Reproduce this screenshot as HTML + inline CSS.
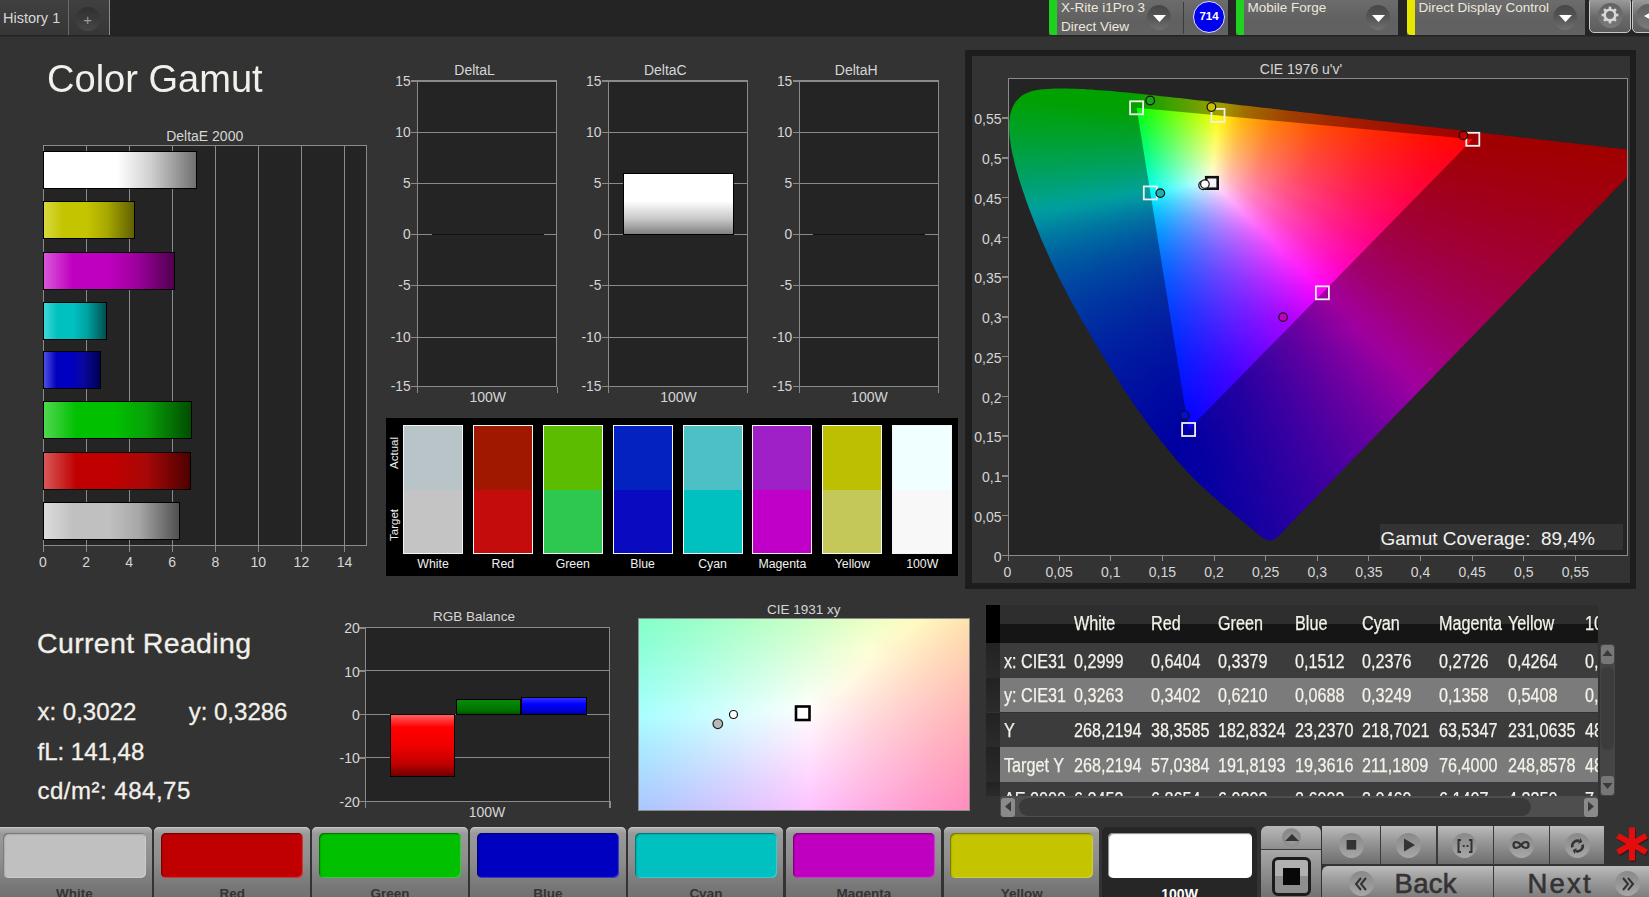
<!DOCTYPE html>
<html><head><meta charset="utf-8"><style>
html,body{margin:0;padding:0;}
body{width:1649px;height:897px;overflow:hidden;position:relative;background:#333333;font-family:'Liberation Sans',sans-serif;}
div,svg{position:absolute;}
</style></head><body>
<div style="left:0px;top:0px;width:1649px;height:36px;background:#242424"></div>
<div style="left:0px;top:36px;width:1649px;height:1px;background:#2b2b2b"></div>
<div style="left:0px;top:0px;width:68px;height:35px;background:linear-gradient(#404040,#363636)"></div>
<div style="left:68px;top:0px;width:1px;height:35px;background:#6a6a6a"></div>
<div style="left:69px;top:0px;width:40px;height:35px;background:linear-gradient(#404040,#363636)"></div>
<div style="left:109px;top:0px;width:1px;height:35px;background:#8a8a8a"></div>
<div style="left:76px;top:7.3px;width:23.5px;height:23.5px;border-radius:50%;background:linear-gradient(#303030,#3a3a3a 50%,#474747)"></div>
<div style="left:77.7px;top:12.3px;width:20px;text-align:center;font-size:15px;line-height:15px;color:#9a9a9a;white-space:nowrap;">+</div>
<div style="left:3px;top:10.7px;font-size:14.5px;line-height:14.5px;color:#d8d8d8;white-space:nowrap;">History 1</div>
<div style="left:1049px;top:0px;width:179px;height:35px;background:linear-gradient(#6c6c6c,#606060 60%,#626262)"></div>
<div style="left:1049px;top:0px;width:8px;height:35px;background:#1fd21f;border-radius:0 0 0 4px"></div>
<div style="left:1061px;top:0.7px;font-size:13.5px;line-height:13.5px;color:#ece8dc;white-space:nowrap;">X-Rite i1Pro 3</div>
<div style="left:1061px;top:19.7px;font-size:13.5px;line-height:13.5px;color:#ece8dc;white-space:nowrap;">Direct View</div>
<div style="left:1147px;top:4.5px;width:24px;height:25px;border-radius:50%;background:linear-gradient(#464646,#585858 55%,#707070)"></div>
<svg style="left:1152.5px;top:14.8px" width="14" height="8"><path d="M0 0H13L6.5 7Z" fill="#fff"/></svg>
<div style="left:1183px;top:2px;width:1px;height:32px;background:#3c3c3c"></div>
<div style="left:1193px;top:0.8px;width:32px;height:32px;border-radius:50%;background:#0000ee;box-sizing:border-box;border:1.3px solid #e0e0ff"></div>
<div style="left:1189.0px;top:11.3px;width:40px;text-align:center;font-size:11.5px;line-height:11.5px;color:#fff;white-space:nowrap;font-weight:bold">714</div>
<div style="left:1235.5px;top:0px;width:162.5px;height:35px;background:linear-gradient(#6c6c6c,#606060 60%,#626262)"></div>
<div style="left:1235.5px;top:0px;width:8px;height:35px;background:#1fd21f;border-radius:0 0 0 4px"></div>
<div style="left:1247.5px;top:0.7px;font-size:13.5px;line-height:13.5px;color:#ece8dc;white-space:nowrap;">Mobile Forge</div>
<div style="left:1366px;top:4.5px;width:24px;height:25px;border-radius:50%;background:linear-gradient(#464646,#585858 55%,#707070)"></div>
<svg style="left:1371.5px;top:14.8px" width="14" height="8"><path d="M0 0H13L6.5 7Z" fill="#fff"/></svg>
<div style="left:1406.5px;top:0px;width:178.5px;height:35px;background:linear-gradient(#6c6c6c,#606060 60%,#626262)"></div>
<div style="left:1406.5px;top:0px;width:8px;height:35px;background:#e6e600;border-radius:0 0 0 4px"></div>
<div style="left:1418.5px;top:0.7px;font-size:13.5px;line-height:13.5px;color:#ece8dc;white-space:nowrap;">Direct Display Control</div>
<div style="left:1553px;top:4.5px;width:24px;height:25px;border-radius:50%;background:linear-gradient(#464646,#585858 55%,#707070)"></div>
<svg style="left:1558.5px;top:14.8px" width="14" height="8"><path d="M0 0H13L6.5 7Z" fill="#fff"/></svg>
<div style="left:1589px;top:-3px;width:42px;height:35.6px;box-sizing:border-box;border:1px solid #c8c8c8;border-radius:5px;background:linear-gradient(#a0a0a0,#6a6a6a 55%,#5c5c5c)"></div>
<div style="left:1597.5px;top:3px;width:25px;height:25px;border-radius:50%;background:linear-gradient(#606060,#7a7a7a)"></div>
<svg style="left:1600px;top:5.4px" width="20" height="20"><rect x="8.7" y="1.6" width="2.6" height="4" fill="#d8d8d8" transform="rotate(0 10 10)"/><rect x="8.7" y="1.6" width="2.6" height="4" fill="#d8d8d8" transform="rotate(45 10 10)"/><rect x="8.7" y="1.6" width="2.6" height="4" fill="#d8d8d8" transform="rotate(90 10 10)"/><rect x="8.7" y="1.6" width="2.6" height="4" fill="#d8d8d8" transform="rotate(135 10 10)"/><rect x="8.7" y="1.6" width="2.6" height="4" fill="#d8d8d8" transform="rotate(180 10 10)"/><rect x="8.7" y="1.6" width="2.6" height="4" fill="#d8d8d8" transform="rotate(225 10 10)"/><rect x="8.7" y="1.6" width="2.6" height="4" fill="#d8d8d8" transform="rotate(270 10 10)"/><rect x="8.7" y="1.6" width="2.6" height="4" fill="#d8d8d8" transform="rotate(315 10 10)"/><circle cx="10" cy="10" r="5.3" fill="none" stroke="#d8d8d8" stroke-width="2.6"/></svg>
<div style="left:1632px;top:-3px;width:30px;height:35.6px;box-sizing:border-box;border:1px solid #c8c8c8;border-radius:5px;background:linear-gradient(#a0a0a0,#6a6a6a 55%,#5c5c5c)"></div>
<div style="left:1636px;top:3.5px;width:25px;height:25px;border-radius:50%;background:linear-gradient(#606060,#7a7a7a)"></div>
<svg style="left:1644px;top:9.5px" width="11" height="12"><path d="M11 0V12L0 6Z" fill="#fff"/></svg>
<div style="left:46.5px;top:58.8px;font-size:39.5px;line-height:39.5px;color:#f2f0ea;white-space:nowrap;transform:scaleX(0.963);transform-origin:0 0">Color Gamut</div>
<div style="left:4.7px;top:129.1px;width:400px;text-align:center;font-size:14px;line-height:14px;color:#d6d6d6;white-space:nowrap;">DeltaE 2000</div>
<div style="left:42.5px;top:145.3px;width:324.0px;height:400.7px;box-sizing:border-box;border:1px solid #8a8a8a;background:#242424"></div>
<div style="left:85.56666666666666px;top:145.3px;width:1px;height:406.7px;background:#8a8a8a"></div>
<div style="left:128.63333333333333px;top:145.3px;width:1px;height:406.7px;background:#8a8a8a"></div>
<div style="left:171.70000000000002px;top:145.3px;width:1px;height:406.7px;background:#8a8a8a"></div>
<div style="left:214.76666666666668px;top:145.3px;width:1px;height:406.7px;background:#8a8a8a"></div>
<div style="left:257.83333333333337px;top:145.3px;width:1px;height:406.7px;background:#8a8a8a"></div>
<div style="left:300.90000000000003px;top:145.3px;width:1px;height:406.7px;background:#8a8a8a"></div>
<div style="left:343.9666666666667px;top:145.3px;width:1px;height:406.7px;background:#8a8a8a"></div>
<div style="left:42.5px;top:545px;width:1px;height:7px;background:#8a8a8a"></div>
<div style="left:23.0px;top:554.9px;width:40px;text-align:center;font-size:14px;line-height:14px;color:#d6d6d6;white-space:nowrap;">0</div>
<div style="left:66.1px;top:554.9px;width:40px;text-align:center;font-size:14px;line-height:14px;color:#d6d6d6;white-space:nowrap;">2</div>
<div style="left:109.1px;top:554.9px;width:40px;text-align:center;font-size:14px;line-height:14px;color:#d6d6d6;white-space:nowrap;">4</div>
<div style="left:152.2px;top:554.9px;width:40px;text-align:center;font-size:14px;line-height:14px;color:#d6d6d6;white-space:nowrap;">6</div>
<div style="left:195.3px;top:554.9px;width:40px;text-align:center;font-size:14px;line-height:14px;color:#d6d6d6;white-space:nowrap;">8</div>
<div style="left:238.3px;top:554.9px;width:40px;text-align:center;font-size:14px;line-height:14px;color:#d6d6d6;white-space:nowrap;">10</div>
<div style="left:281.4px;top:554.9px;width:40px;text-align:center;font-size:14px;line-height:14px;color:#d6d6d6;white-space:nowrap;">12</div>
<div style="left:324.5px;top:554.9px;width:40px;text-align:center;font-size:14px;line-height:14px;color:#d6d6d6;white-space:nowrap;">14</div>
<div style="left:43.0px;top:151.4px;width:153.5px;height:38px;box-sizing:border-box;border:1px solid #000;background:linear-gradient(90deg,#fff,#fff 22%,#fff 48%,#d0d0d0 70%,#707070)"></div>
<div style="left:43.0px;top:201.4px;width:91.5px;height:38px;box-sizing:border-box;border:1px solid #000;background:linear-gradient(90deg,#d8d840,#c4c400 22%,#c4c400 48%,#a8a800 70%,#606000)"></div>
<div style="left:43.0px;top:251.6px;width:131.5px;height:38px;box-sizing:border-box;border:1px solid #000;background:linear-gradient(90deg,#d858d8,#c000c0 22%,#c000c0 48%,#a000a0 70%,#500050)"></div>
<div style="left:43.0px;top:301.5px;width:64.2px;height:38px;box-sizing:border-box;border:1px solid #000;background:linear-gradient(90deg,#40d8d8,#00c0c0 22%,#00c0c0 48%,#00a0a0 70%,#005050)"></div>
<div style="left:43.0px;top:351.3px;width:57.8px;height:38px;box-sizing:border-box;border:1px solid #000;background:linear-gradient(90deg,#5050e0,#0000c0 22%,#0000c0 48%,#0808a0 70%,#000050)"></div>
<div style="left:43.0px;top:401.3px;width:148.8px;height:38px;box-sizing:border-box;border:1px solid #000;background:linear-gradient(90deg,#50d850,#00c000 22%,#00c000 48%,#08a008 70%,#004d00)"></div>
<div style="left:43.0px;top:451.6px;width:147.5px;height:38px;box-sizing:border-box;border:1px solid #000;background:linear-gradient(90deg,#d85858,#c00000 22%,#c00000 48%,#a80808 70%,#4d0000)"></div>
<div style="left:43.0px;top:501.5px;width:136.6px;height:38px;box-sizing:border-box;border:1px solid #000;background:linear-gradient(90deg,#dcdcdc,#c0c0c0 22%,#c0c0c0 48%,#a8a8a8 70%,#505050)"></div>
<div style="left:274.5px;top:63.3px;width:400px;text-align:center;font-size:14px;line-height:14px;color:#d6d6d6;white-space:nowrap;">DeltaL</div>
<div style="left:416.9px;top:79.8px;width:140.60000000000002px;height:307.4px;box-sizing:border-box;border:1px solid #8a8a8a;border-top-width:2px;background:#242424"></div>
<div style="left:410.9px;top:80.0px;width:6px;height:1.5px;background:#8a8a8a"></div>
<div style="left:370.6px;top:74.5px;width:40px;text-align:right;font-size:13.8px;line-height:13.8px;color:#d6d6d6;white-space:nowrap;">15</div>
<div style="left:416.9px;top:131.7px;width:140.60000000000002px;height:1px;background:#8a8a8a"></div>
<div style="left:410.9px;top:131.7px;width:6px;height:1.5px;background:#8a8a8a"></div>
<div style="left:370.6px;top:126.2px;width:40px;text-align:right;font-size:13.8px;line-height:13.8px;color:#d6d6d6;white-space:nowrap;">10</div>
<div style="left:416.9px;top:182.8px;width:140.60000000000002px;height:1px;background:#8a8a8a"></div>
<div style="left:410.9px;top:182.8px;width:6px;height:1.5px;background:#8a8a8a"></div>
<div style="left:370.6px;top:177.3px;width:40px;text-align:right;font-size:13.8px;line-height:13.8px;color:#d6d6d6;white-space:nowrap;">5</div>
<div style="left:416.9px;top:233.8px;width:140.60000000000002px;height:1px;background:#8a8a8a"></div>
<div style="left:410.9px;top:233.8px;width:6px;height:1.5px;background:#8a8a8a"></div>
<div style="left:370.6px;top:228.3px;width:40px;text-align:right;font-size:13.8px;line-height:13.8px;color:#d6d6d6;white-space:nowrap;">0</div>
<div style="left:416.9px;top:284.7px;width:140.60000000000002px;height:1px;background:#8a8a8a"></div>
<div style="left:410.9px;top:284.7px;width:6px;height:1.5px;background:#8a8a8a"></div>
<div style="left:370.6px;top:279.2px;width:40px;text-align:right;font-size:13.8px;line-height:13.8px;color:#d6d6d6;white-space:nowrap;">-5</div>
<div style="left:416.9px;top:336.6px;width:140.60000000000002px;height:1px;background:#8a8a8a"></div>
<div style="left:410.9px;top:336.6px;width:6px;height:1.5px;background:#8a8a8a"></div>
<div style="left:370.6px;top:331.1px;width:40px;text-align:right;font-size:13.8px;line-height:13.8px;color:#d6d6d6;white-space:nowrap;">-10</div>
<div style="left:410.9px;top:385.9px;width:6px;height:1.5px;background:#8a8a8a"></div>
<div style="left:370.6px;top:380.4px;width:40px;text-align:right;font-size:13.8px;line-height:13.8px;color:#d6d6d6;white-space:nowrap;">-15</div>
<div style="left:416.9px;top:387.2px;width:1px;height:6px;background:#8a8a8a"></div>
<div style="left:556.5px;top:387.2px;width:1px;height:6px;background:#8a8a8a"></div>
<div style="left:287.7px;top:390.1px;width:400px;text-align:center;font-size:14px;line-height:14px;color:#d6d6d6;white-space:nowrap;">100W</div>
<div style="left:431.5px;top:233.8px;width:112.0px;height:1.3px;background:#111"></div>
<div style="left:465.3px;top:63.3px;width:400px;text-align:center;font-size:14px;line-height:14px;color:#d6d6d6;white-space:nowrap;">DeltaC</div>
<div style="left:607.6999999999999px;top:79.8px;width:140.60000000000002px;height:307.4px;box-sizing:border-box;border:1px solid #8a8a8a;border-top-width:2px;background:#242424"></div>
<div style="left:601.6999999999999px;top:80.0px;width:6px;height:1.5px;background:#8a8a8a"></div>
<div style="left:561.4px;top:74.5px;width:40px;text-align:right;font-size:13.8px;line-height:13.8px;color:#d6d6d6;white-space:nowrap;">15</div>
<div style="left:607.6999999999999px;top:131.7px;width:140.60000000000002px;height:1px;background:#8a8a8a"></div>
<div style="left:601.6999999999999px;top:131.7px;width:6px;height:1.5px;background:#8a8a8a"></div>
<div style="left:561.4px;top:126.2px;width:40px;text-align:right;font-size:13.8px;line-height:13.8px;color:#d6d6d6;white-space:nowrap;">10</div>
<div style="left:607.6999999999999px;top:182.8px;width:140.60000000000002px;height:1px;background:#8a8a8a"></div>
<div style="left:601.6999999999999px;top:182.8px;width:6px;height:1.5px;background:#8a8a8a"></div>
<div style="left:561.4px;top:177.3px;width:40px;text-align:right;font-size:13.8px;line-height:13.8px;color:#d6d6d6;white-space:nowrap;">5</div>
<div style="left:607.6999999999999px;top:233.8px;width:140.60000000000002px;height:1px;background:#8a8a8a"></div>
<div style="left:601.6999999999999px;top:233.8px;width:6px;height:1.5px;background:#8a8a8a"></div>
<div style="left:561.4px;top:228.3px;width:40px;text-align:right;font-size:13.8px;line-height:13.8px;color:#d6d6d6;white-space:nowrap;">0</div>
<div style="left:607.6999999999999px;top:284.7px;width:140.60000000000002px;height:1px;background:#8a8a8a"></div>
<div style="left:601.6999999999999px;top:284.7px;width:6px;height:1.5px;background:#8a8a8a"></div>
<div style="left:561.4px;top:279.2px;width:40px;text-align:right;font-size:13.8px;line-height:13.8px;color:#d6d6d6;white-space:nowrap;">-5</div>
<div style="left:607.6999999999999px;top:336.6px;width:140.60000000000002px;height:1px;background:#8a8a8a"></div>
<div style="left:601.6999999999999px;top:336.6px;width:6px;height:1.5px;background:#8a8a8a"></div>
<div style="left:561.4px;top:331.1px;width:40px;text-align:right;font-size:13.8px;line-height:13.8px;color:#d6d6d6;white-space:nowrap;">-10</div>
<div style="left:601.6999999999999px;top:385.9px;width:6px;height:1.5px;background:#8a8a8a"></div>
<div style="left:561.4px;top:380.4px;width:40px;text-align:right;font-size:13.8px;line-height:13.8px;color:#d6d6d6;white-space:nowrap;">-15</div>
<div style="left:607.6999999999999px;top:387.2px;width:1px;height:6px;background:#8a8a8a"></div>
<div style="left:747.3px;top:387.2px;width:1px;height:6px;background:#8a8a8a"></div>
<div style="left:478.5px;top:390.1px;width:400px;text-align:center;font-size:14px;line-height:14px;color:#d6d6d6;white-space:nowrap;">100W</div>
<div style="left:622.5px;top:173px;width:111.3px;height:62px;box-sizing:border-box;border:1px solid #000;background:linear-gradient(#fff,#fff 45%,#c8c8c8 75%,#808080)"></div>
<div style="left:656.2px;top:63.3px;width:400px;text-align:center;font-size:14px;line-height:14px;color:#d6d6d6;white-space:nowrap;">DeltaH</div>
<div style="left:798.6px;top:79.8px;width:140.60000000000002px;height:307.4px;box-sizing:border-box;border:1px solid #8a8a8a;border-top-width:2px;background:#242424"></div>
<div style="left:792.6px;top:80.0px;width:6px;height:1.5px;background:#8a8a8a"></div>
<div style="left:752.3px;top:74.5px;width:40px;text-align:right;font-size:13.8px;line-height:13.8px;color:#d6d6d6;white-space:nowrap;">15</div>
<div style="left:798.6px;top:131.7px;width:140.60000000000002px;height:1px;background:#8a8a8a"></div>
<div style="left:792.6px;top:131.7px;width:6px;height:1.5px;background:#8a8a8a"></div>
<div style="left:752.3px;top:126.2px;width:40px;text-align:right;font-size:13.8px;line-height:13.8px;color:#d6d6d6;white-space:nowrap;">10</div>
<div style="left:798.6px;top:182.8px;width:140.60000000000002px;height:1px;background:#8a8a8a"></div>
<div style="left:792.6px;top:182.8px;width:6px;height:1.5px;background:#8a8a8a"></div>
<div style="left:752.3px;top:177.3px;width:40px;text-align:right;font-size:13.8px;line-height:13.8px;color:#d6d6d6;white-space:nowrap;">5</div>
<div style="left:798.6px;top:233.8px;width:140.60000000000002px;height:1px;background:#8a8a8a"></div>
<div style="left:792.6px;top:233.8px;width:6px;height:1.5px;background:#8a8a8a"></div>
<div style="left:752.3px;top:228.3px;width:40px;text-align:right;font-size:13.8px;line-height:13.8px;color:#d6d6d6;white-space:nowrap;">0</div>
<div style="left:798.6px;top:284.7px;width:140.60000000000002px;height:1px;background:#8a8a8a"></div>
<div style="left:792.6px;top:284.7px;width:6px;height:1.5px;background:#8a8a8a"></div>
<div style="left:752.3px;top:279.2px;width:40px;text-align:right;font-size:13.8px;line-height:13.8px;color:#d6d6d6;white-space:nowrap;">-5</div>
<div style="left:798.6px;top:336.6px;width:140.60000000000002px;height:1px;background:#8a8a8a"></div>
<div style="left:792.6px;top:336.6px;width:6px;height:1.5px;background:#8a8a8a"></div>
<div style="left:752.3px;top:331.1px;width:40px;text-align:right;font-size:13.8px;line-height:13.8px;color:#d6d6d6;white-space:nowrap;">-10</div>
<div style="left:792.6px;top:385.9px;width:6px;height:1.5px;background:#8a8a8a"></div>
<div style="left:752.3px;top:380.4px;width:40px;text-align:right;font-size:13.8px;line-height:13.8px;color:#d6d6d6;white-space:nowrap;">-15</div>
<div style="left:798.6px;top:387.2px;width:1px;height:6px;background:#8a8a8a"></div>
<div style="left:938.2px;top:387.2px;width:1px;height:6px;background:#8a8a8a"></div>
<div style="left:669.4px;top:390.1px;width:400px;text-align:center;font-size:14px;line-height:14px;color:#d6d6d6;white-space:nowrap;">100W</div>
<div style="left:813.2px;top:233.8px;width:112.0px;height:1.3px;background:#111"></div>
<div style="left:386px;top:418.4px;width:572px;height:157.4px;background:#000"></div>
<div style="left:403.0px;top:425px;width:60px;height:129px;box-sizing:border-box;border:1.5px solid #f4f4f4;background:linear-gradient(#b8c4c8 64px,#c4c4c4 64px)"></div>
<div style="left:393.0px;top:557.6px;width:80px;text-align:center;font-size:12.3px;line-height:12.3px;color:#f0f0f0;white-space:nowrap;">White</div>
<div style="left:472.88px;top:425px;width:60px;height:129px;box-sizing:border-box;border:1.5px solid #f4f4f4;background:linear-gradient(#a01800 64px,#c40c0c 64px)"></div>
<div style="left:462.9px;top:557.6px;width:80px;text-align:center;font-size:12.3px;line-height:12.3px;color:#f0f0f0;white-space:nowrap;">Red</div>
<div style="left:542.76px;top:425px;width:60px;height:129px;box-sizing:border-box;border:1.5px solid #f4f4f4;background:linear-gradient(#5cbc00 64px,#2ec850 64px)"></div>
<div style="left:532.8px;top:557.6px;width:80px;text-align:center;font-size:12.3px;line-height:12.3px;color:#f0f0f0;white-space:nowrap;">Green</div>
<div style="left:612.64px;top:425px;width:60px;height:129px;box-sizing:border-box;border:1.5px solid #f4f4f4;background:linear-gradient(#0422c0 64px,#0a0ac0 64px)"></div>
<div style="left:602.6px;top:557.6px;width:80px;text-align:center;font-size:12.3px;line-height:12.3px;color:#f0f0f0;white-space:nowrap;">Blue</div>
<div style="left:682.52px;top:425px;width:60px;height:129px;box-sizing:border-box;border:1.5px solid #f4f4f4;background:linear-gradient(#4cc0c4 64px,#00c0c0 64px)"></div>
<div style="left:672.5px;top:557.6px;width:80px;text-align:center;font-size:12.3px;line-height:12.3px;color:#f0f0f0;white-space:nowrap;">Cyan</div>
<div style="left:752.4px;top:425px;width:60px;height:129px;box-sizing:border-box;border:1.5px solid #f4f4f4;background:linear-gradient(#a020c8 64px,#c000c8 64px)"></div>
<div style="left:742.4px;top:557.6px;width:80px;text-align:center;font-size:12.3px;line-height:12.3px;color:#f0f0f0;white-space:nowrap;">Magenta</div>
<div style="left:822.28px;top:425px;width:60px;height:129px;box-sizing:border-box;border:1.5px solid #f4f4f4;background:linear-gradient(#bcc000 64px,#c4c858 64px)"></div>
<div style="left:812.3px;top:557.6px;width:80px;text-align:center;font-size:12.3px;line-height:12.3px;color:#f0f0f0;white-space:nowrap;">Yellow</div>
<div style="left:892.16px;top:425px;width:60px;height:129px;box-sizing:border-box;border:1.5px solid #f4f4f4;background:linear-gradient(#f0ffff 64px,#f8f8f8 64px)"></div>
<div style="left:882.2px;top:557.6px;width:80px;text-align:center;font-size:12.3px;line-height:12.3px;color:#f0f0f0;white-space:nowrap;">100W</div>
<div style="left:368px;top:446px;width:52px;height:14px;transform:rotate(-90deg);font-size:11.5px;line-height:14px;text-align:center;color:#eee">Actual</div>
<div style="left:368px;top:518px;width:52px;height:14px;transform:rotate(-90deg);font-size:11.5px;line-height:14px;text-align:center;color:#eee">Target</div>
<div style="left:965px;top:50px;width:671px;height:539px;background:#1d1d1d"></div>
<div style="left:971.5px;top:56px;width:658.5px;height:527px;background:#333333"></div>
<div style="left:1101.0px;top:62.3px;width:400px;text-align:center;font-size:14px;line-height:14px;color:#d6d6d6;white-space:nowrap;">CIE 1976 u'v'</div>
<div style="left:1008px;top:78px;width:620px;height:477px;overflow:hidden;background:#242424">
<div style="left:0;top:0;width:620px;height:477px;clip-path:polygon(264.3px 462.1px,261.1px 462.4px,257.8px 461.5px,254.5px 459.6px,251.3px 457.2px,248.2px 454.6px,245.1px 452.1px,242.1px 449.5px,239.0px 446.9px,236.0px 444.3px,232.9px 441.8px,229.8px 439.2px,226.7px 436.7px,223.6px 434.1px,220.6px 431.6px,217.5px 429.0px,214.4px 426.5px,211.4px 423.9px,208.3px 421.3px,205.3px 418.6px,202.3px 416.0px,199.3px 413.3px,196.4px 410.6px,193.5px 407.9px,190.6px 405.1px,187.7px 402.3px,184.9px 399.5px,182.1px 396.7px,179.3px 393.8px,176.6px 390.8px,173.9px 387.9px,171.2px 384.9px,168.6px 381.9px,166.0px 378.8px,163.4px 375.8px,160.9px 372.7px,158.3px 369.6px,155.8px 366.5px,153.3px 363.4px,150.9px 360.2px,148.4px 357.1px,146.0px 353.9px,143.6px 350.7px,141.2px 347.5px,138.8px 344.3px,136.4px 341.1px,134.1px 337.8px,131.8px 334.6px,129.4px 331.3px,127.2px 328.0px,124.9px 324.7px,122.6px 321.4px,120.4px 318.1px,118.2px 314.8px,115.9px 311.5px,113.7px 308.1px,111.6px 304.8px,109.4px 301.4px,107.2px 298.0px,105.1px 294.7px,103.0px 291.3px,100.9px 287.9px,98.8px 284.5px,96.7px 281.1px,94.6px 277.6px,92.5px 274.2px,90.4px 270.8px,88.4px 267.4px,86.3px 263.9px,84.3px 260.5px,82.3px 257.0px,80.3px 253.6px,78.3px 250.1px,76.3px 246.7px,74.3px 243.2px,72.3px 239.7px,70.3px 236.2px,68.4px 232.7px,66.4px 229.2px,64.5px 225.7px,62.6px 222.2px,60.7px 218.7px,58.8px 215.1px,57.0px 211.6px,55.2px 208.0px,53.3px 204.5px,51.6px 200.9px,49.8px 197.3px,48.0px 193.7px,46.3px 190.1px,44.6px 186.5px,42.9px 182.9px,41.3px 179.2px,39.6px 175.6px,38.0px 171.9px,36.4px 168.3px,34.8px 164.6px,33.2px 160.9px,31.7px 157.2px,30.2px 153.5px,28.6px 149.8px,27.1px 146.1px,25.7px 142.4px,24.2px 138.7px,22.8px 134.9px,21.4px 131.2px,20.0px 127.4px,18.6px 123.7px,17.3px 119.9px,16.0px 116.1px,14.7px 112.4px,13.4px 108.6px,12.2px 104.7px,11.0px 100.9px,9.9px 97.1px,8.8px 93.2px,7.7px 89.4px,6.7px 85.5px,5.8px 81.6px,4.9px 77.7px,4.0px 73.8px,3.3px 69.9px,2.6px 66.0px,2.1px 62.0px,1.6px 58.0px,1.3px 54.0px,1.1px 50.1px,1.1px 46.1px,1.4px 42.1px,1.9px 38.1px,2.8px 34.3px,4.0px 30.5px,5.7px 26.9px,7.8px 23.6px,10.4px 20.7px,13.3px 18.1px,16.7px 16.0px,20.2px 14.4px,24.0px 13.1px,27.9px 12.3px,31.8px 11.6px,35.8px 11.2px,39.8px 10.9px,43.8px 10.7px,47.8px 10.6px,51.8px 10.6px,55.8px 10.6px,59.8px 10.6px,63.8px 10.7px,67.8px 10.8px,71.8px 11.0px,75.8px 11.1px,79.8px 11.4px,83.7px 11.6px,87.7px 11.9px,91.7px 12.2px,95.7px 12.5px,99.7px 12.8px,103.7px 13.1px,107.7px 13.5px,111.7px 13.9px,115.6px 14.2px,119.6px 14.6px,123.6px 15.0px,127.6px 15.4px,131.6px 15.8px,135.5px 16.2px,139.5px 16.7px,143.5px 17.1px,147.5px 17.5px,151.4px 17.9px,155.4px 18.4px,159.4px 18.8px,163.4px 19.3px,167.3px 19.7px,171.3px 20.1px,175.3px 20.6px,179.3px 21.0px,183.2px 21.5px,187.2px 21.9px,191.2px 22.4px,195.2px 22.8px,199.1px 23.3px,203.1px 23.7px,207.1px 24.2px,211.1px 24.6px,215.0px 25.1px,219.0px 25.5px,223.0px 26.0px,227.0px 26.5px,230.9px 26.9px,234.9px 27.4px,238.9px 27.8px,242.9px 28.3px,246.8px 28.7px,250.8px 29.2px,254.8px 29.7px,258.8px 30.1px,262.7px 30.6px,266.7px 31.0px,270.7px 31.5px,274.6px 31.9px,278.6px 32.4px,282.6px 32.9px,286.6px 33.3px,290.5px 33.8px,294.5px 34.2px,298.5px 34.7px,302.5px 35.1px,306.4px 35.6px,310.4px 36.1px,314.4px 36.5px,318.4px 37.0px,322.3px 37.4px,326.3px 37.9px,330.3px 38.3px,334.3px 38.8px,338.2px 39.3px,342.2px 39.7px,346.2px 40.2px,350.2px 40.6px,354.1px 41.1px,358.1px 41.5px,362.1px 42.0px,366.0px 42.5px,370.0px 42.9px,374.0px 43.4px,378.0px 43.8px,381.9px 44.3px,385.9px 44.8px,389.9px 45.2px,393.9px 45.7px,397.8px 46.1px,401.8px 46.6px,405.8px 47.0px,409.8px 47.5px,413.7px 48.0px,417.7px 48.4px,421.7px 48.9px,425.7px 49.3px,429.6px 49.8px,433.6px 50.2px,437.6px 50.7px,441.5px 51.2px,445.5px 51.6px,449.5px 52.1px,453.5px 52.5px,457.4px 53.0px,461.4px 53.4px,465.4px 53.9px,469.4px 54.3px,473.3px 54.8px,477.3px 55.2px,481.3px 55.7px,485.3px 56.2px,489.2px 56.6px,493.2px 57.1px,497.2px 57.5px,501.2px 58.0px,505.1px 58.4px,509.1px 58.9px,513.1px 59.4px,517.1px 59.8px,521.0px 60.3px,525.0px 60.7px,529.0px 61.2px,532.9px 61.7px,536.9px 62.1px,540.9px 62.6px,544.9px 63.0px,548.8px 63.5px,552.8px 63.9px,556.8px 64.4px,560.8px 64.8px,564.7px 65.3px,568.7px 65.8px,572.7px 66.2px,576.7px 66.7px,580.6px 67.1px,584.6px 67.6px,588.6px 68.0px,592.6px 68.5px,596.5px 69.0px,600.5px 69.4px,604.5px 69.9px,608.5px 70.3px,612.4px 70.8px,616.4px 71.3px,620.4px 71.7px,624.3px 72.2px,628.3px 72.6px,632.3px 73.1px,636.1px 73.6px,638.5px 74.6px,639.4px 76.2px,638.9px 78.2px,636.8px 80.9px,634.0px 83.7px,631.2px 86.6px,628.4px 89.5px,625.6px 92.3px,622.9px 95.2px,620.1px 98.1px,617.3px 100.9px,614.5px 103.8px,611.7px 106.7px,608.9px 109.6px,606.1px 112.4px,603.3px 115.3px,600.6px 118.2px,597.8px 121.0px,595.0px 123.9px,592.2px 126.8px,589.4px 129.6px,586.6px 132.5px,583.8px 135.4px,581.0px 138.2px,578.3px 141.1px,575.5px 144.0px,572.7px 146.9px,569.9px 149.7px,567.1px 152.6px,564.3px 155.5px,561.5px 158.3px,558.7px 161.2px,556.0px 164.1px,553.2px 166.9px,550.4px 169.8px,547.6px 172.7px,544.8px 175.5px,542.0px 178.4px,539.2px 181.3px,536.5px 184.2px,533.7px 187.0px,530.9px 189.9px,528.1px 192.8px,525.3px 195.6px,522.5px 198.5px,519.7px 201.4px,516.9px 204.2px,514.2px 207.1px,511.4px 210.0px,508.6px 212.8px,505.8px 215.7px,503.0px 218.6px,500.2px 221.5px,497.4px 224.3px,494.6px 227.2px,491.9px 230.1px,489.1px 232.9px,486.3px 235.8px,483.5px 238.7px,480.7px 241.5px,477.9px 244.4px,475.1px 247.3px,472.4px 250.1px,469.6px 253.0px,466.8px 255.9px,464.0px 258.8px,461.2px 261.6px,458.4px 264.5px,455.6px 267.4px,452.8px 270.2px,450.1px 273.1px,447.3px 276.0px,444.5px 278.8px,441.7px 281.7px,438.9px 284.6px,436.1px 287.4px,433.3px 290.3px,430.5px 293.2px,427.8px 296.1px,425.0px 298.9px,422.2px 301.8px,419.4px 304.7px,416.6px 307.5px,413.8px 310.4px,411.0px 313.3px,408.2px 316.1px,405.5px 319.0px,402.7px 321.9px,399.9px 324.7px,397.1px 327.6px,394.3px 330.5px,391.5px 333.4px,388.7px 336.2px,386.0px 339.1px,383.2px 342.0px,380.4px 344.8px,377.6px 347.7px,374.8px 350.6px,372.0px 353.4px,369.2px 356.3px,366.4px 359.2px,363.7px 362.0px,360.9px 364.9px,358.1px 367.8px,355.3px 370.7px,352.5px 373.5px,349.7px 376.4px,346.9px 379.3px,344.1px 382.1px,341.4px 385.0px,338.6px 387.9px,335.8px 390.7px,333.0px 393.6px,330.2px 396.5px,327.4px 399.3px,324.6px 402.2px,321.8px 405.1px,319.1px 408.0px,316.3px 410.8px,313.5px 413.7px,310.7px 416.6px,307.9px 419.4px,305.1px 422.3px,302.3px 425.2px,299.6px 428.0px,296.8px 430.9px,294.0px 433.8px,291.2px 436.6px,288.4px 439.5px,285.6px 442.4px,282.8px 445.3px,280.0px 448.1px,277.3px 451.0px,274.5px 453.9px,271.7px 456.7px,268.9px 459.5px,265.8px 461.5px)"><div style="left:-10px;top:-10px;width:640px;height:497px;filter:blur(2.5px)"><div style="left:0;top:0px;width:640px;height:6px;background:linear-gradient(90deg,#00a100 0px,#00a100 60px,#00a100 120px,#04a100 135px,#65a100 195px,#a19e00 225px,#a16a00 257px,#a13c00 310px,#a12100 370px,#a11100 430px,#a10700 490px,#a10000 550px,#a10000 610px,#a10000 639px)"></div><div style="left:0;top:5px;width:640px;height:6px;background:linear-gradient(90deg,#00a100 0px,#00a100 60px,#00a100 120px,#04a100 136px,#67a100 196px,#a19d00 225px,#a16800 257px,#a13b00 310px,#a12100 370px,#a11100 430px,#a10600 490px,#a10000 550px,#a10000 610px,#a10000 639px)"></div><div style="left:0;top:10px;width:640px;height:6px;background:linear-gradient(90deg,#00a100 0px,#00a100 60px,#00a100 120px,#05a100 137px,#67a100 196px,#a19e00 224px,#a16a00 255px,#a13d00 306px,#a12100 366px,#a11100 426px,#a10600 486px,#a10000 546px,#a10000 606px,#a10000 639px)"></div><div style="left:0;top:15px;width:640px;height:6px;background:linear-gradient(90deg,#00a100 0px,#00a100 60px,#00a100 120px,#05a100 138px,#68a100 196px,#a19d00 224px,#a16900 255px,#a13c00 306px,#a12000 366px,#a11000 426px,#a10500 486px,#a10000 546px,#a10000 606px,#a10000 639px)"></div><div style="left:0;top:20px;width:640px;height:6px;background:linear-gradient(90deg,#00a100 0px,#00a100 60px,#00a100 120px,#04a100 138px,#66a100 195px,#a19e00 223px,#a16a00 253px,#a13d00 302px,#a12100 362px,#a11000 422px,#a10500 482px,#a10000 542px,#a10000 602px,#a10000 639px)"></div><div style="left:0;top:25px;width:640px;height:6px;background:linear-gradient(90deg,#00a101 0px,#00a100 60px,#00a100 120px,#04a100 139px,#66a100 195px,#a19d00 223px,#a16900 253px,#a13c00 302px,#a12000 362px,#a10f00 422px,#a10500 482px,#a10000 542px,#a10000 602px,#a10000 639px)"></div><div style="left:0;top:30px;width:640px;height:6px;background:linear-gradient(90deg,#00a106 0px,#00a100 60px,#00a100 120px,#05a100 140px,#66a100 195px,#a19e00 222px,#a16a00 251px,#a13d00 299px,#a12000 359px,#a10f00 419px,#a10500 479px,#a10000 539px,#a10000 599px,#a10000 639px)"></div><div style="left:0;top:35px;width:640px;height:6px;background:linear-gradient(90deg,#00a10b 0px,#00a106 60px,#00a100 120px,#04a100 140px,#66a100 195px,#a19d00 222px,#a16900 251px,#a13c00 299px,#a11f00 359px,#a10f00 419px,#a10400 479px,#a10000 539px,#a10000 599px,#a10000 639px)"></div><div style="left:0;top:40px;width:640px;height:6px;background:linear-gradient(90deg,#00a110 0px,#00a10c 60px,#00a106 120px,#04a103 141px,#66a100 195px,#a19e00 221px,#a16900 250px,#a13c00 297px,#a11f00 357px,#a10e00 417px,#a10400 477px,#a10000 537px,#a10000 597px,#a10000 639px)"></div><div style="left:0;top:45px;width:640px;height:6px;background:linear-gradient(90deg,#00a115 0px,#00a112 60px,#00a10d 120px,#04a10b 142px,#66a104 195px,#a19d00 221px,#a16900 249px,#a13c00 295px,#a11f00 355px,#a10e00 415px,#a10300 475px,#a10000 535px,#a10000 595px,#a10000 639px)"></div><div style="left:0;top:50px;width:640px;height:6px;background:linear-gradient(90deg,#00a11b 0px,#00a118 60px,#00a114 120px,#05a112 143px,#67a10d 195px,#a19e09 220px,#a16903 248px,#a13d00 293px,#a11e00 353px,#a10e00 413px,#a10300 473px,#a10000 533px,#a10000 593px,#a10000 639px)"></div><div style="left:0;top:55px;width:640px;height:6px;background:linear-gradient(90deg,#00a120 0px,#00a11e 60px,#00a11b 120px,#03a11a 143px,#65a116 194px,#a19d13 220px,#a1690b 247px,#a13c03 292px,#a11e00 352px,#a10d00 412px,#a10200 472px,#a10000 532px,#a10000 592px,#a10000 639px)"></div><div style="left:0;top:60px;width:640px;height:6px;background:linear-gradient(90deg,#00a126 0px,#00a125 60px,#00a123 120px,#04a122 144px,#65a11f 194px,#a19e1d 219px,#a16912 246px,#a13c09 290px,#a11e02 350px,#a10d00 410px,#a10200 470px,#a10000 530px,#a10000 590px,#a10000 639px)"></div><div style="left:0;top:65px;width:640px;height:6px;background:linear-gradient(90deg,#00a12c 0px,#00a12b 60px,#00a12a 120px,#04a12a 145px,#65a129 194px,#a19d27 219px,#a1691a 245px,#a13d0e 288px,#a11d06 348px,#a10c01 408px,#a10100 468px,#a10000 528px,#a10000 588px,#a10000 639px)"></div><div style="left:0;top:70px;width:640px;height:6px;background:linear-gradient(90deg,#00a132 0px,#00a132 60px,#00a132 120px,#04a133 146px,#65a133 194px,#a19e32 218px,#a16a22 244px,#a13d14 286px,#a11d0a 346px,#a10c04 406px,#a10101 466px,#a10000 526px,#a10000 586px,#a10000 639px)"></div><div style="left:0;top:75px;width:640px;height:6px;background:linear-gradient(90deg,#00a138 0px,#00a139 60px,#00a13b 120px,#03a13b 146px,#65a13d 194px,#a19d3d 218px,#a1682a 244px,#a13c19 286px,#a11c0d 346px,#a10b07 406px,#a10003 466px,#a10001 526px,#a10000 586px,#a10000 639px)"></div><div style="left:0;top:80px;width:640px;height:6px;background:linear-gradient(90deg,#00a13e 0px,#00a140 60px,#00a143 120px,#04a144 147px,#65a148 194px,#a19f49 217px,#a16a33 242px,#a13d20 283px,#a11c12 343px,#a10b0a 403px,#a10006 463px,#a10003 523px,#a10000 583px,#a10000 639px)"></div><div style="left:0;top:85px;width:640px;height:6px;background:linear-gradient(90deg,#00a144 0px,#00a147 60px,#00a14c 120px,#04a14e 148px,#65a153 194px,#a19d55 217px,#a1683b 242px,#a13b25 283px,#a11b16 343px,#a10a0d 403px,#a10008 463px,#a10005 523px,#a10002 583px,#a10000 639px)"></div><div style="left:0;top:90px;width:640px;height:6px;background:linear-gradient(90deg,#00a14b 0px,#00a14f 60px,#00a154 120px,#04a158 149px,#66a15f 194px,#a19f62 216px,#a16a45 240px,#a13d2d 279px,#a11c1a 339px,#a10a11 399px,#a1000b 459px,#a10007 519px,#a10004 579px,#a10002 639px)"></div><div style="left:0;top:95px;width:640px;height:6px;background:linear-gradient(90deg,#00a151 0px,#00a157 60px,#00a15e 120px,#03a162 149px,#63a16a 193px,#a19d6e 216px,#a1694e 240px,#a13c33 279px,#a11b1e 339px,#a10914 399px,#a1000d 459px,#a10009 519px,#a10006 579px,#a10003 639px)"></div><div style="left:0;top:100px;width:640px;height:6px;background:linear-gradient(90deg,#00a158 0px,#00a15e 60px,#00a167 120px,#03a16d 150px,#66a177 194px,#a19f7c 215px,#a16a59 238px,#a13d3a 276px,#a11b23 336px,#a10917 396px,#a10010 456px,#a1000b 516px,#a10008 576px,#a10005 636px,#a10005 639px)"></div><div style="left:0;top:105px;width:640px;height:6px;background:linear-gradient(90deg,#00a15f 0px,#00a166 60px,#00a171 120px,#04a178 151px,#66a184 194px,#a19d89 215px,#a16962 238px,#a13c41 275px,#a11a28 335px,#a1081b 395px,#a10013 455px,#a1000d 515px,#a10009 575px,#a10007 635px,#a10006 639px)"></div><div style="left:0;top:110px;width:640px;height:6px;background:linear-gradient(90deg,#00a166 0px,#00a16f 60px,#00a17b 120px,#04a183 152px,#66a192 194px,#a19f99 214px,#a16b6e 236px,#a13d4a 272px,#a11a2d 332px,#a1081e 392px,#a10015 452px,#a10010 512px,#a1000b 572px,#a10008 632px,#a10008 639px)"></div><div style="left:0;top:115px;width:640px;height:6px;background:linear-gradient(90deg,#00a16d 0px,#00a177 60px,#00a185 120px,#03a18f 152px,#64a19f 193px,#a1949e 217px,#a16171 241px,#a1354a 280px,#a1162e 340px,#a10520 400px,#a10017 460px,#a10011 520px,#a1000d 580px,#a10009 639px)"></div><div style="left:0;top:120px;width:640px;height:6px;background:linear-gradient(90deg,#00a175 0px,#00a180 60px,#00a190 120px,#03a19b 153px,#5f94a1 194px,#a1859e 222px,#a15570 248px,#a12b48 293px,#a1102e 353px,#a10221 413px,#a10018 473px,#a10012 533px,#a1000e 593px,#a1000b 639px)"></div><div style="left:0;top:125px;width:640px;height:6px;background:linear-gradient(90deg,#00a17c 0px,#00a189 60px,#00a19b 120px,#0399a1 154px,#847fa1 214px,#a1759c 228px,#a1486d 257px,#a12145 308px,#a10b2e 368px,#a10021 428px,#a10018 488px,#a10013 548px,#a1000e 608px,#a1000d 639px)"></div><div style="left:0;top:130px;width:640px;height:6px;background:linear-gradient(90deg,#00a184 0px,#00a192 60px,#009ba1 120px,#048ea1 155px,#7d74a1 215px,#a1699d 233px,#a13f6d 264px,#a11b45 318px,#a1082f 378px,#a10022 438px,#a1001a 498px,#a10014 558px,#a1000f 618px,#a1000e 639px)"></div><div style="left:0;top:135px;width:640px;height:6px;background:linear-gradient(90deg,#00a18c 0px,#00a19c 60px,#0092a1 117px,#0484a1 156px,#776ba1 216px,#a15f9d 238px,#a1376d 271px,#a11645 328px,#a1042f 388px,#a10023 448px,#a1001b 508px,#a10015 568px,#a10010 628px,#a10010 639px)"></div><div style="left:0;top:140px;width:640px;height:6px;background:linear-gradient(90deg,#00a194 0px,#009ca1 60px,#0088a1 120px,#047aa1 157px,#7162a1 217px,#a1559d 243px,#a1306e 277px,#a11245 336px,#a10231 396px,#a10024 456px,#a1001c 516px,#a10016 576px,#a10011 636px,#a10011 639px)"></div><div style="left:0;top:145px;width:640px;height:6px;background:linear-gradient(90deg,#00a19c 0px,#0093a1 60px,#007fa1 120px,#0472a1 158px,#6c5aa1 218px,#a14c9d 248px,#a12a6d 284px,#a10e46 344px,#a10032 404px,#a10025 464px,#a1001d 524px,#a10017 584px,#a10013 639px)"></div><div style="left:0;top:150px;width:640px;height:6px;background:linear-gradient(90deg,#009da1 0px,#008ba1 60px,#0078a1 120px,#046aa1 159px,#6753a1 219px,#a1449e 253px,#a1246d 291px,#a10a47 351px,#a10033 411px,#a10027 471px,#a1001e 531px,#a10018 591px,#a10014 639px)"></div><div style="left:0;top:155px;width:640px;height:6px;background:linear-gradient(90deg,#0095a1 0px,#0084a1 60px,#0071a1 120px,#0463a1 160px,#634da1 220px,#a13d9e 258px,#a11f6e 297px,#a10849 357px,#a10035 417px,#a10028 477px,#a10020 537px,#a10019 597px,#a10016 639px)"></div><div style="left:0;top:160px;width:640px;height:6px;background:linear-gradient(90deg,#008ea1 0px,#007da1 60px,#006aa1 120px,#045da1 161px,#5f47a1 221px,#a1369e 263px,#a11a6e 304px,#a1054a 364px,#a10036 424px,#a10029 484px,#a10021 544px,#a1001a 604px,#a10018 639px)"></div><div style="left:0;top:165px;width:640px;height:6px;background:linear-gradient(90deg,#0087a1 0px,#0076a1 60px,#0064a1 120px,#0357a1 161px,#5a42a1 221px,#a12f9c 269px,#a1156d 312px,#a1024a 372px,#a10037 432px,#a1002a 492px,#a10022 552px,#a1001b 612px,#a10019 639px)"></div><div style="left:0;top:170px;width:640px;height:6px;background:linear-gradient(90deg,#0080a1 0px,#0070a1 60px,#005fa1 120px,#0351a1 162px,#563da1 222px,#a1299d 274px,#a1106c 319px,#a1004b 379px,#a10038 439px,#a1002c 499px,#a10023 559px,#a1001d 619px,#a1001b 639px)"></div><div style="left:0;top:175px;width:640px;height:6px;background:linear-gradient(90deg,#007ba1 0px,#006ba1 60px,#005aa1 120px,#034ca1 163px,#5339a1 223px,#a1249d 279px,#a10d6d 325px,#a1004c 385px,#a10039 445px,#a1002d 505px,#a10024 565px,#a1001e 625px,#a1001c 639px)"></div><div style="left:0;top:180px;width:640px;height:6px;background:linear-gradient(90deg,#0075a1 0px,#0065a1 60px,#0055a1 120px,#0348a1 164px,#5134a1 224px,#a11f9d 284px,#a1096d 332px,#a1004d 392px,#a1003a 452px,#a1002e 512px,#a10025 572px,#a1001f 632px,#a1001e 639px)"></div><div style="left:0;top:185px;width:640px;height:6px;background:linear-gradient(90deg,#0070a1 0px,#0061a1 60px,#0050a1 120px,#0443a1 165px,#4e30a1 225px,#9f1ca1 285px,#a1056c 340px,#a1004d 400px,#a1003b 460px,#a1002f 520px,#a10026 580px,#a10020 639px)"></div><div style="left:0;top:190px;width:640px;height:6px;background:linear-gradient(90deg,#006ba1 0px,#005ca1 60px,#004ca1 120px,#043fa1 166px,#4c2da1 226px,#9919a1 286px,#a11397 299px,#a10168 353px,#a1004c 413px,#a1003a 473px,#a1002f 533px,#a10026 593px,#a10021 639px)"></div><div style="left:0;top:195px;width:640px;height:6px;background:linear-gradient(90deg,#0066a1 0px,#0058a1 60px,#0048a1 120px,#043ba1 167px,#4929a1 227px,#9416a1 287px,#a1119b 301px,#a1006b 355px,#a1004e 415px,#a1003d 475px,#a10030 535px,#a10028 595px,#a10023 639px)"></div><div style="left:0;top:200px;width:640px;height:6px;background:linear-gradient(90deg,#0062a1 0px,#0054a1 60px,#0044a1 120px,#0437a1 168px,#4726a1 228px,#9013a1 288px,#a10d9c 305px,#a1006c 360px,#a10050 420px,#a1003e 480px,#a10032 540px,#a10029 600px,#a10024 639px)"></div><div style="left:0;top:205px;width:640px;height:6px;background:linear-gradient(90deg,#005ea1 0px,#0050a1 60px,#0041a1 120px,#0434a1 169px,#4523a1 229px,#8b11a1 289px,#a10a9c 310px,#a10070 361px,#a10052 421px,#a10040 481px,#a10034 541px,#a1002b 601px,#a10026 639px)"></div><div style="left:0;top:210px;width:640px;height:6px;background:linear-gradient(90deg,#005aa1 0px,#004ca1 60px,#003ea1 120px,#0431a1 170px,#4320a1 230px,#870fa1 290px,#a1079d 315px,#a1006f 369px,#a10053 429px,#a10041 489px,#a10034 549px,#a1002b 609px,#a10028 639px)"></div><div style="left:0;top:215px;width:640px;height:6px;background:linear-gradient(90deg,#0057a1 0px,#0049a1 60px,#003ba1 120px,#042ea1 171px,#421ea1 231px,#830ca1 291px,#a1039d 320px,#a1006d 380px,#a10052 440px,#a10040 500px,#a10035 560px,#a1002c 620px,#a10029 639px)"></div><div style="left:0;top:220px;width:640px;height:6px;background:linear-gradient(90deg,#0053a1 0px,#0046a1 60px,#0038a1 120px,#042ba1 172px,#401ba1 232px,#800aa1 292px,#a1009d 325px,#a1006e 385px,#a10053 445px,#a10042 505px,#a10036 565px,#a1002d 625px,#a1002b 639px)"></div><div style="left:0;top:225px;width:640px;height:6px;background:linear-gradient(90deg,#0050a1 0px,#0043a1 60px,#0035a1 120px,#0428a1 173px,#3e19a1 233px,#7c08a1 293px,#a1009d 330px,#a1006f 390px,#a10054 450px,#a10043 510px,#a10037 570px,#a1002e 630px,#a1002d 639px)"></div><div style="left:0;top:230px;width:640px;height:6px;background:linear-gradient(90deg,#004da1 0px,#0040a1 60px,#0032a1 120px,#0426a1 174px,#3d16a1 234px,#7906a1 294px,#a1009d 335px,#a10070 395px,#a10055 455px,#a10044 515px,#a10038 575px,#a1002f 635px,#a1002e 639px)"></div><div style="left:0;top:235px;width:640px;height:6px;background:linear-gradient(90deg,#004aa1 0px,#003da1 60px,#0030a1 120px,#0423a1 175px,#3b14a1 235px,#7605a1 295px,#a1009c 341px,#a10070 401px,#a10056 461px,#a10045 521px,#a10039 581px,#a10030 639px)"></div><div style="left:0;top:240px;width:640px;height:6px;background:linear-gradient(90deg,#0047a1 0px,#003ba1 60px,#002ea1 120px,#0421a1 176px,#3a12a1 236px,#7303a1 296px,#a1009c 346px,#a10071 406px,#a10057 466px,#a10046 526px,#a1003a 586px,#a10032 639px)"></div><div style="left:0;top:245px;width:640px;height:6px;background:linear-gradient(90deg,#0044a1 0px,#0038a1 60px,#002ba1 120px,#041fa1 176px,#3811a1 236px,#6f02a1 296px,#a1009c 351px,#a10072 411px,#a10058 471px,#a10047 531px,#a1003b 591px,#a10033 639px)"></div><div style="left:0;top:250px;width:640px;height:6px;background:linear-gradient(90deg,#0042a1 0px,#0036a1 60px,#0029a1 120px,#041da1 177px,#370fa1 237px,#6d00a1 297px,#a1009d 356px,#a10073 416px,#a10059 476px,#a10048 536px,#a1003c 596px,#a10035 639px)"></div><div style="left:0;top:255px;width:640px;height:6px;background:linear-gradient(90deg,#003fa1 0px,#0033a1 60px,#0027a1 120px,#041ba1 178px,#360da1 238px,#6a00a1 298px,#a1009f 358px,#a10075 418px,#a1005b 478px,#a1004a 538px,#a1003d 598px,#a10037 639px)"></div><div style="left:0;top:260px;width:640px;height:6px;background:linear-gradient(90deg,#003da1 0px,#0031a1 60px,#0025a1 120px,#0419a1 179px,#350ba1 239px,#6800a1 299px,#9e00a1 359px,#a10078 419px,#a1005d 479px,#a1004c 539px,#a1003f 599px,#a10038 639px)"></div><div style="left:0;top:265px;width:640px;height:6px;background:linear-gradient(90deg,#003aa1 0px,#002fa1 60px,#0023a1 120px,#0417a1 180px,#340aa1 240px,#6600a1 300px,#9b00a1 360px,#a10095 380px,#a10070 440px,#a10059 500px,#a10049 560px,#a1003d 620px,#a1003a 639px)"></div><div style="left:0;top:270px;width:640px;height:6px;background:linear-gradient(90deg,#0038a1 0px,#002da1 60px,#0021a1 120px,#0315a1 180px,#3208a1 240px,#6300a1 300px,#9600a1 360px,#a1009a 379px,#a10074 439px,#a1005c 499px,#a1004b 559px,#a1003f 619px,#a1003c 639px)"></div><div style="left:0;top:275px;width:640px;height:6px;background:linear-gradient(90deg,#0036a1 0px,#002ba1 60px,#0020a1 120px,#0314a1 180px,#3007a1 240px,#6000a1 300px,#9200a1 360px,#a1009b 383px,#a10075 443px,#a1005d 503px,#a1004d 563px,#a10040 623px,#a1003e 639px)"></div><div style="left:0;top:280px;width:640px;height:6px;background:linear-gradient(90deg,#0034a1 0px,#0029a1 60px,#001ea1 120px,#0212a1 180px,#2e06a1 240px,#5d00a1 300px,#8e00a1 360px,#a1009c 388px,#a10076 448px,#a1005e 508px,#a1004d 568px,#a10041 628px,#a1003f 639px)"></div><div style="left:0;top:285px;width:640px;height:6px;background:linear-gradient(90deg,#0032a1 0px,#0028a1 60px,#001ca1 120px,#0111a1 180px,#2d05a1 240px,#5b00a1 300px,#8a00a1 360px,#a1009c 392px,#a10077 452px,#a1005f 512px,#a1004f 572px,#a10042 632px,#a10041 639px)"></div><div style="left:0;top:290px;width:640px;height:6px;background:linear-gradient(90deg,#0030a1 0px,#0026a1 60px,#001ba1 120px,#0110a1 180px,#2b04a1 240px,#5800a1 300px,#8700a1 360px,#a1009d 397px,#a10078 457px,#a10060 517px,#a1004f 577px,#a10043 637px,#a10043 639px)"></div><div style="left:0;top:295px;width:640px;height:6px;background:linear-gradient(90deg,#002fa1 0px,#0024a1 60px,#001aa1 120px,#000ea1 180px,#2a03a1 240px,#5600a1 300px,#8300a1 360px,#a1009d 402px,#a10078 462px,#a10061 522px,#a10050 582px,#a10045 639px)"></div><div style="left:0;top:300px;width:640px;height:6px;background:linear-gradient(90deg,#002da1 0px,#0023a1 60px,#0018a1 120px,#000da1 180px,#2902a1 240px,#5300a1 300px,#8000a1 360px,#a1009d 407px,#a10079 467px,#a10062 527px,#a10051 587px,#a10046 639px)"></div><div style="left:0;top:305px;width:640px;height:6px;background:linear-gradient(90deg,#002ba1 0px,#0021a1 60px,#0017a1 120px,#000ca1 180px,#2701a1 240px,#5100a1 300px,#7d00a1 360px,#a1009d 412px,#a1007a 472px,#a10062 532px,#a10052 592px,#a10048 639px)"></div><div style="left:0;top:310px;width:640px;height:6px;background:linear-gradient(90deg,#002aa1 0px,#0020a1 60px,#0015a1 120px,#000ba1 180px,#2600a1 240px,#4f00a1 300px,#7a00a1 360px,#a1009d 417px,#a1007a 477px,#a10063 537px,#a10053 597px,#a1004a 639px)"></div><div style="left:0;top:315px;width:640px;height:6px;background:linear-gradient(90deg,#0028a1 0px,#001ea1 60px,#0014a1 120px,#000aa1 180px,#2500a1 240px,#4d00a1 300px,#7700a1 360px,#a1009e 420px,#a1007c 480px,#a10064 540px,#a10054 600px,#a1004c 639px)"></div><div style="left:0;top:320px;width:640px;height:6px;background:linear-gradient(90deg,#0026a1 0px,#001da1 60px,#0013a1 120px,#0009a1 180px,#2400a1 240px,#4b00a1 300px,#7400a1 360px,#9f00a1 420px,#a1007e 480px,#a10067 540px,#a10056 600px,#a1004d 639px)"></div><div style="left:0;top:325px;width:640px;height:6px;background:linear-gradient(90deg,#0025a1 0px,#001ca1 60px,#0012a1 120px,#0008a1 180px,#2200a1 240px,#4900a1 300px,#7100a1 360px,#9c00a1 420px,#a1008f 454px,#a10073 514px,#a1005f 574px,#a10050 634px,#a1004f 639px)"></div><div style="left:0;top:330px;width:640px;height:6px;background:linear-gradient(90deg,#0024a1 0px,#001aa1 60px,#0011a1 120px,#0007a1 180px,#2100a1 240px,#4700a1 300px,#6f00a1 360px,#9800a1 420px,#a1009a 442px,#a1007a 502px,#a10064 562px,#a10055 622px,#a10051 639px)"></div><div style="left:0;top:335px;width:640px;height:6px;background:linear-gradient(90deg,#0022a1 0px,#0019a1 60px,#0010a1 120px,#0006a1 180px,#2000a1 240px,#4600a1 300px,#6c00a1 360px,#9500a1 420px,#a1009b 445px,#a1007b 505px,#a10066 565px,#a10056 625px,#a10053 639px)"></div><div style="left:0;top:340px;width:640px;height:6px;background:linear-gradient(90deg,#0021a1 0px,#0018a1 60px,#000fa1 120px,#0005a1 180px,#1f00a1 240px,#4400a1 300px,#6a00a1 360px,#9200a1 420px,#a1009b 450px,#a1007c 510px,#a10066 570px,#a10057 630px,#a10055 639px)"></div><div style="left:0;top:345px;width:640px;height:6px;background:linear-gradient(90deg,#0020a1 0px,#0017a1 60px,#000ea1 120px,#0004a1 180px,#1e00a1 240px,#4200a1 300px,#6800a1 360px,#8f00a1 420px,#a1009c 454px,#a1007d 514px,#a10067 574px,#a10057 634px,#a10056 639px)"></div><div style="left:0;top:350px;width:640px;height:6px;background:linear-gradient(90deg,#001ea1 0px,#0016a1 60px,#000da1 120px,#0003a1 180px,#1600a1 227px,#3900a1 287px,#5d00a1 347px,#8300a1 407px,#a1009c 459px,#a1007d 519px,#a10068 579px,#a10058 639px)"></div><div style="left:0;top:355px;width:640px;height:6px;background:linear-gradient(90deg,#001da1 0px,#0015a1 60px,#000ca1 120px,#0002a1 180px,#1100a1 220px,#3300a1 280px,#5700a1 340px,#7c00a1 400px,#a1009f 460px,#a1007f 520px,#a1006a 580px,#a1005a 639px)"></div><div style="left:0;top:360px;width:640px;height:6px;background:linear-gradient(90deg,#001ca1 0px,#0013a1 60px,#000ba1 120px,#0001a1 180px,#0f00a1 217px,#3000a1 277px,#5300a1 337px,#7800a1 397px,#9d00a1 457px,#a10083 517px,#a1006d 577px,#a1005c 637px,#a1005c 639px)"></div><div style="left:0;top:365px;width:640px;height:6px;background:linear-gradient(90deg,#001ba1 0px,#0012a1 60px,#000aa1 120px,#0001a1 180px,#0c00a1 214px,#2d00a1 274px,#5000a1 334px,#7300a1 394px,#9800a1 454px,#a1009a 479px,#a1007d 539px,#a10068 599px,#a1005e 639px)"></div><div style="left:0;top:370px;width:640px;height:6px;background:linear-gradient(90deg,#001aa1 0px,#0011a1 60px,#0009a1 120px,#0000a1 180px,#0b00a1 212px,#2b00a1 272px,#4d00a1 332px,#7000a1 392px,#9400a1 452px,#a1009b 481px,#a1007e 541px,#a1006a 601px,#a10060 639px)"></div><div style="left:0;top:375px;width:640px;height:6px;background:linear-gradient(90deg,#0019a1 0px,#0011a1 60px,#0008a1 120px,#0000a1 180px,#0a00a1 212px,#2a00a1 272px,#4b00a1 332px,#6e00a1 392px,#9100a1 452px,#a1009b 486px,#a1007f 546px,#a1006a 606px,#a10061 639px)"></div><div style="left:0;top:380px;width:640px;height:6px;background:linear-gradient(90deg,#0018a1 0px,#0010a1 60px,#0007a1 120px,#0000a1 180px,#0900a1 212px,#2900a1 272px,#4a00a1 332px,#6b00a1 392px,#8e00a1 452px,#a1009c 490px,#a1007f 550px,#a1006b 610px,#a10063 639px)"></div><div style="left:0;top:385px;width:640px;height:6px;background:linear-gradient(90deg,#0017a1 0px,#000fa1 60px,#0006a1 120px,#0000a1 180px,#0900a1 212px,#2800a1 272px,#4800a1 332px,#6900a1 392px,#8c00a1 452px,#a1009c 495px,#a10080 555px,#a1006c 615px,#a10065 639px)"></div><div style="left:0;top:390px;width:640px;height:6px;background:linear-gradient(90deg,#0016a1 0px,#000ea1 60px,#0006a1 120px,#0000a1 180px,#0800a1 212px,#2700a1 272px,#4700a1 332px,#6700a1 392px,#8900a1 452px,#a1009c 500px,#a10080 560px,#a1006c 620px,#a10067 639px)"></div><div style="left:0;top:395px;width:640px;height:6px;background:linear-gradient(90deg,#0015a1 0px,#000da1 60px,#0005a1 120px,#0000a1 180px,#0800a1 212px,#2600a1 272px,#4500a1 332px,#6500a1 392px,#8700a1 452px,#a1009c 505px,#a10081 565px,#a1006d 625px,#a10069 639px)"></div><div style="left:0;top:400px;width:640px;height:6px;background:linear-gradient(90deg,#0014a1 0px,#000ca1 60px,#0004a1 120px,#0000a1 180px,#0800a1 213px,#2600a1 273px,#4400a1 333px,#6400a1 393px,#8500a1 453px,#a1009c 510px,#a10081 570px,#a1006d 630px,#a1006b 639px)"></div><div style="left:0;top:405px;width:640px;height:6px;background:linear-gradient(90deg,#0013a1 0px,#000ba1 60px,#0003a1 120px,#0000a1 180px,#0800a1 214px,#2500a1 274px,#4300a1 334px,#6300a1 394px,#8300a1 454px,#a1009d 514px,#a10082 574px,#a1006e 634px,#a1006d 639px)"></div><div style="left:0;top:410px;width:640px;height:6px;background:linear-gradient(90deg,#0012a1 0px,#000ba1 60px,#0003a1 120px,#0000a1 180px,#0700a1 214px,#2400a1 274px,#4200a1 334px,#6100a1 394px,#8100a1 454px,#a100a0 514px,#a10084 574px,#a10070 634px,#a1006e 639px)"></div><div style="left:0;top:415px;width:640px;height:6px;background:linear-gradient(90deg,#0011a1 0px,#000aa1 60px,#0002a1 120px,#0000a1 180px,#0700a1 215px,#2400a1 275px,#4100a1 335px,#6000a1 395px,#7f00a1 455px,#9f00a1 515px,#a10086 575px,#a10072 635px,#a10070 639px)"></div><div style="left:0;top:420px;width:640px;height:6px;background:linear-gradient(90deg,#0010a1 0px,#0009a1 60px,#0001a1 120px,#0000a1 180px,#0700a1 215px,#2300a1 275px,#4000a1 335px,#5e00a1 395px,#7d00a1 455px,#9d00a1 515px,#a10088 575px,#a10073 635px,#a10072 639px)"></div><div style="left:0;top:425px;width:640px;height:6px;background:linear-gradient(90deg,#0010a1 0px,#0008a1 60px,#0001a1 120px,#0000a1 180px,#0700a1 216px,#2300a1 276px,#3f00a1 336px,#5d00a1 396px,#7b00a1 456px,#9b00a1 516px,#a10095 550px,#a1007d 610px,#a10074 639px)"></div><div style="left:0;top:430px;width:640px;height:6px;background:linear-gradient(90deg,#000fa1 0px,#0008a1 60px,#0000a1 120px,#0000a1 180px,#0700a1 217px,#2200a1 277px,#3f00a1 337px,#5c00a1 397px,#7a00a1 457px,#9800a1 517px,#a10099 548px,#a10080 608px,#a10076 639px)"></div><div style="left:0;top:435px;width:640px;height:6px;background:linear-gradient(90deg,#000ea1 0px,#0007a1 60px,#0000a1 120px,#0000a1 180px,#0700a1 218px,#2200a1 278px,#3e00a1 338px,#5a00a1 398px,#7800a1 458px,#9700a1 518px,#a1009a 550px,#a10082 610px,#a10078 639px)"></div><div style="left:0;top:440px;width:640px;height:6px;background:linear-gradient(90deg,#000da1 0px,#0006a1 60px,#0000a1 120px,#0000a1 180px,#0600a1 218px,#2100a1 278px,#3d00a1 338px,#5900a1 398px,#7600a1 458px,#9400a1 518px,#a1009b 554px,#a10082 614px,#a1007a 639px)"></div><div style="left:0;top:445px;width:640px;height:6px;background:linear-gradient(90deg,#000da1 0px,#0006a1 60px,#0000a1 120px,#0000a1 180px,#0600a1 219px,#2100a1 279px,#3c00a1 339px,#5800a1 399px,#7500a1 459px,#9200a1 519px,#a1009c 558px,#a10083 618px,#a1007c 639px)"></div><div style="left:0;top:450px;width:640px;height:6px;background:linear-gradient(90deg,#000ca1 0px,#0005a1 60px,#0000a1 120px,#0000a1 180px,#0600a1 220px,#2000a1 280px,#3b00a1 340px,#5700a1 400px,#7300a1 460px,#9000a1 520px,#a1009c 563px,#a10083 623px,#a1007e 639px)"></div><div style="left:0;top:455px;width:640px;height:6px;background:linear-gradient(90deg,#000ba1 0px,#0004a1 60px,#0000a1 120px,#0000a1 180px,#0600a1 221px,#2000a1 281px,#3b00a1 341px,#5600a1 401px,#7200a1 461px,#8f00a1 521px,#a1009c 568px,#a10084 628px,#a10080 639px)"></div><div style="left:0;top:460px;width:640px;height:6px;background:linear-gradient(90deg,#000aa1 0px,#0004a1 60px,#0000a1 120px,#0000a1 180px,#0600a1 222px,#2000a1 282px,#3a00a1 342px,#5500a1 402px,#7000a1 462px,#8d00a1 522px,#a1009c 573px,#a10084 633px,#a10082 639px)"></div><div style="left:0;top:465px;width:640px;height:6px;background:linear-gradient(90deg,#000aa1 0px,#0003a1 60px,#0000a1 120px,#0000a1 180px,#0600a1 222px,#1f00a1 282px,#3900a1 342px,#5300a1 402px,#6f00a1 462px,#8b00a1 522px,#a1009c 578px,#a10084 638px,#a10084 639px)"></div><div style="left:0;top:470px;width:640px;height:6px;background:linear-gradient(90deg,#0009a1 0px,#0002a1 60px,#0000a1 120px,#0000a1 180px,#0600a1 223px,#1f00a1 283px,#3800a1 343px,#5300a1 403px,#6d00a1 463px,#8900a1 523px,#a1009c 583px,#a10086 639px)"></div><div style="left:0;top:475px;width:640px;height:6px;background:linear-gradient(90deg,#0008a1 0px,#0002a1 60px,#0000a1 120px,#0000a1 180px,#0600a1 224px,#1f00a1 284px,#3800a1 344px,#5200a1 404px,#6c00a1 464px,#8800a1 524px,#a1009e 584px,#a10088 639px)"></div><div style="left:0;top:480px;width:640px;height:6px;background:linear-gradient(90deg,#0008a1 0px,#0001a1 60px,#0000a1 120px,#0000a1 180px,#0600a1 225px,#1e00a1 285px,#3700a1 345px,#5100a1 405px,#6b00a1 465px,#8600a1 525px,#a100a0 585px,#a1008a 639px)"></div><div style="left:0;top:485px;width:640px;height:6px;background:linear-gradient(90deg,#0007a1 0px,#0001a1 60px,#0000a1 120px,#0000a1 180px,#0600a1 225px,#1e00a1 285px,#3700a1 345px,#5000a1 405px,#6a00a1 465px,#8500a1 525px,#a000a1 585px,#a1008b 639px)"></div><div style="left:0;top:490px;width:640px;height:6px;background:linear-gradient(90deg,#0007a1 0px,#0001a1 60px,#0000a1 120px,#0000a1 180px,#0600a1 225px,#1e00a1 285px,#3700a1 345px,#5000a1 405px,#6a00a1 465px,#8500a1 525px,#a000a1 585px,#a1008b 639px)"></div><div style="left:0;top:495px;width:640px;height:6px;background:linear-gradient(90deg,#0007a1 0px,#0001a1 60px,#0000a1 120px,#0000a1 180px,#0600a1 225px,#1e00a1 285px,#3700a1 345px,#5000a1 405px,#6a00a1 465px,#8500a1 525px,#a000a1 585px,#a1008b 639px)"></div></div></div>
<div style="left:0;top:0;width:620px;height:477px;clip-path:polygon(464.8px 61.3px,128.6px 29.8px,180.6px 351.5px)"><div style="left:-10px;top:-10px;width:640px;height:497px;filter:blur(1.5px)"><div style="left:0;top:0px;width:640px;height:5px;background:linear-gradient(90deg,#00ff00 0px,#00ff00 60px,#00ff00 120px,#03ff00 133px,#a2ff00 193px,#fffb00 225px,#ffb800 252px,#ff7c00 292px,#ff4900 352px,#ff2a00 412px,#ff1400 472px,#ff0300 532px,#ff0000 592px,#ff0000 639px)"></div><div style="left:0;top:4px;width:640px;height:5px;background:linear-gradient(90deg,#00ff00 0px,#00ff00 60px,#00ff00 120px,#05ff00 134px,#a5ff00 194px,#fffd00 224px,#ffbb00 250px,#ff7f00 289px,#ff4a00 349px,#ff2a00 409px,#ff1400 469px,#ff0300 529px,#ff0000 589px,#ff0000 639px)"></div><div style="left:0;top:8px;width:640px;height:5px;background:linear-gradient(90deg,#00ff00 0px,#00ff00 60px,#00ff00 120px,#03ff00 134px,#a6ff00 194px,#fffc00 224px,#ffba00 250px,#ff7e00 288px,#ff4900 348px,#ff2900 408px,#ff1300 468px,#ff0200 528px,#ff0000 588px,#ff0000 639px)"></div><div style="left:0;top:12px;width:640px;height:5px;background:linear-gradient(90deg,#00ff00 0px,#00ff00 60px,#00ff00 120px,#04ff00 135px,#a9ff00 195px,#fffe00 223px,#ffbc00 248px,#ff8100 285px,#ff4b00 343px,#ff2a00 403px,#ff1400 463px,#ff0200 523px,#ff0000 583px,#ff0000 639px)"></div><div style="left:0;top:16px;width:640px;height:5px;background:linear-gradient(90deg,#00ff00 0px,#00ff00 60px,#00ff00 120px,#02ff00 135px,#a9ff00 195px,#fffd00 223px,#ffbb00 248px,#ff7f00 285px,#ff4a00 343px,#ff2900 403px,#ff1300 463px,#ff0100 523px,#ff0000 583px,#ff0000 639px)"></div><div style="left:0;top:20px;width:640px;height:5px;background:linear-gradient(90deg,#00ff00 0px,#00ff00 60px,#00ff00 120px,#03ff00 136px,#acff00 196px,#fffb00 223px,#ffb900 248px,#ff7e00 285px,#ff4900 343px,#ff2800 403px,#ff1200 463px,#ff0000 523px,#ff0000 583px,#ff0000 639px)"></div><div style="left:0;top:24px;width:640px;height:5px;background:linear-gradient(90deg,#00ff00 0px,#00ff00 60px,#00ff00 120px,#04ff00 137px,#afff00 197px,#fffd00 222px,#ffba00 247px,#ff7e00 284px,#ff4900 341px,#ff2800 401px,#ff1100 461px,#ff0000 521px,#ff0000 581px,#ff0000 639px)"></div><div style="left:0;top:28px;width:640px;height:5px;background:linear-gradient(90deg,#00ff08 0px,#00ff00 60px,#00ff00 120px,#02ff00 137px,#afff00 197px,#fffc00 222px,#ffbb00 246px,#ff7f00 282px,#ff4a00 338px,#ff2800 398px,#ff1100 458px,#ff0000 518px,#ff0000 578px,#ff0000 638px,#ff0000 639px)"></div><div style="left:0;top:32px;width:640px;height:5px;background:linear-gradient(90deg,#00ff11 0px,#00ff06 60px,#00ff00 120px,#03ff00 138px,#b3ff00 198px,#fffb00 222px,#ffb900 246px,#ff7e00 282px,#ff4900 338px,#ff2700 398px,#ff1000 458px,#ff0000 518px,#ff0000 578px,#ff0000 638px,#ff0000 639px)"></div><div style="left:0;top:36px;width:640px;height:5px;background:linear-gradient(90deg,#00ff18 0px,#00ff0f 60px,#00ff01 120px,#04ff00 139px,#b6ff00 199px,#fffd00 221px,#ffba00 245px,#ff7f00 280px,#ff4a00 335px,#ff2700 395px,#ff1000 455px,#ff0000 515px,#ff0000 575px,#ff0000 635px,#ff0000 639px)"></div><div style="left:0;top:40px;width:640px;height:5px;background:linear-gradient(90deg,#00ff20 0px,#00ff18 60px,#00ff0d 120px,#02ff09 139px,#9dff00 191px,#fffc00 221px,#ffb900 245px,#ff7d00 280px,#ff4800 335px,#ff2600 395px,#ff0f00 455px,#ff0000 515px,#ff0000 575px,#ff0000 635px,#ff0000 639px)"></div><div style="left:0;top:44px;width:640px;height:5px;background:linear-gradient(90deg,#00ff28 0px,#00ff21 60px,#00ff18 120px,#03ff14 140px,#baff04 200px,#fffe00 220px,#ffbb00 243px,#ff8000 277px,#ff4b00 330px,#ff2700 390px,#ff1000 450px,#ff0000 510px,#ff0000 570px,#ff0000 630px,#ff0000 639px)"></div><div style="left:0;top:48px;width:640px;height:5px;background:linear-gradient(90deg,#00ff2f 0px,#00ff2a 60px,#00ff22 120px,#01ff1f 140px,#bbff12 200px,#fffc0c 220px,#ffba03 243px,#ff7e00 277px,#ff4900 330px,#ff2600 390px,#ff0f00 450px,#ff0000 510px,#ff0000 570px,#ff0000 630px,#ff0000 639px)"></div><div style="left:0;top:52px;width:640px;height:5px;background:linear-gradient(90deg,#00ff37 0px,#00ff32 60px,#00ff2c 120px,#02ff29 141px,#bfff1f 201px,#fffb1b 220px,#ffb80f 243px,#ff7d05 277px,#ff4800 330px,#ff2500 390px,#ff0d00 450px,#ff0000 508px,#ff0000 568px,#ff0000 628px,#ff0000 639px)"></div><div style="left:0;top:56px;width:640px;height:5px;background:linear-gradient(90deg,#00ff3e 0px,#00ff3b 60px,#00ff36 120px,#04ff34 142px,#c3ff2c 202px,#fffd29 219px,#ffbb1c 241px,#ff7f0f 274px,#ff4a03 325px,#ff2600 385px,#ff0e00 445px,#ff0000 503px,#ff0000 563px,#ff0000 623px,#ff0000 639px)"></div><div style="left:0;top:60px;width:640px;height:5px;background:linear-gradient(90deg,#00ff46 0px,#00ff44 60px,#00ff40 120px,#01ff3f 142px,#c3ff3a 202px,#fffc37 219px,#ffba26 241px,#ff7e17 274px,#ff490a 325px,#ff2500 385px,#ff0d00 445px,#ff0000 500px,#ff0000 560px,#ff0000 620px,#ff0000 639px)"></div><div style="left:0;top:64px;width:640px;height:5px;background:linear-gradient(90deg,#00ff4e 0px,#00ff4c 60px,#00ff4a 120px,#03ff4a 143px,#c7ff47 203px,#fffe46 218px,#ffbd33 239px,#ff8221 270px,#ff4c12 319px,#ff2606 379px,#ff0e00 439px,#ff0000 495px,#ff0000 555px,#ff0000 615px,#ff0000 639px)"></div><div style="left:0;top:68px;width:640px;height:5px;background:linear-gradient(90deg,#00ff55 0px,#00ff55 60px,#00ff55 120px,#04ff55 144px,#ccff54 204px,#fffd53 218px,#ffbb3d 239px,#ff802a 270px,#ff4b18 319px,#ff250c 379px,#ff0d03 439px,#ff0000 492px,#ff0000 552px,#ff0000 612px,#ff0000 639px)"></div><div style="left:0;top:72px;width:640px;height:5px;background:linear-gradient(90deg,#00ff5d 0px,#00ff5e 60px,#00ff5f 120px,#02ff60 144px,#ccff62 204px,#fffb61 218px,#ffba48 239px,#ff7f32 270px,#ff491e 319px,#ff2411 379px,#ff0b08 439px,#ff0002 489px,#ff0000 549px,#ff0000 609px,#ff0000 639px)"></div><div style="left:0;top:76px;width:640px;height:5px;background:linear-gradient(90deg,#00ff65 0px,#00ff67 60px,#00ff69 120px,#03ff6b 145px,#d1ff6f 205px,#fffe70 217px,#ffbb54 238px,#ff7f3b 269px,#ff4a25 317px,#ff2416 377px,#ff0b0c 437px,#ff0006 486px,#ff0001 546px,#ff0000 606px,#ff0000 639px)"></div><div style="left:0;top:80px;width:640px;height:5px;background:linear-gradient(90deg,#00ff6c 0px,#00ff70 60px,#00ff74 120px,#00ff76 145px,#d2ff7d 205px,#fffc7e 217px,#ffbb60 237px,#ff8045 267px,#ff4b2d 314px,#ff241b 374px,#ff0b11 434px,#ff000b 481px,#ff0005 541px,#ff0000 601px,#ff0000 639px)"></div><div style="left:0;top:84px;width:640px;height:5px;background:linear-gradient(90deg,#00ff74 0px,#00ff79 60px,#00ff7f 120px,#02ff82 146px,#d3ff8c 205px,#fffa8c 217px,#ffba6b 237px,#ff7e4d 267px,#ff4933 314px,#ff2220 374px,#ff0915 434px,#ff000e 479px,#ff0008 539px,#ff0003 599px,#ff0000 639px)"></div><div style="left:0;top:88px;width:640px;height:5px;background:linear-gradient(90deg,#00ff7c 0px,#00ff82 60px,#00ff89 120px,#03ff8e 147px,#cfff9a 204px,#fffd9c 216px,#ffba77 236px,#ff8057 265px,#ff4a3a 311px,#ff2326 371px,#ff0919 431px,#ff0012 475px,#ff000c 535px,#ff0006 595px,#ff0003 639px)"></div><div style="left:0;top:92px;width:640px;height:5px;background:linear-gradient(90deg,#00ff84 0px,#00ff8b 60px,#00ff94 120px,#00ff9a 147px,#d4ffa9 205px,#fffbaa 216px,#ffb983 236px,#ff7e60 265px,#ff4941 311px,#ff212a 371px,#ff081d 431px,#ff0016 473px,#ff000f 533px,#ff0009 593px,#ff0006 639px)"></div><div style="left:0;top:96px;width:640px;height:5px;background:linear-gradient(90deg,#00ff8c 0px,#00ff95 60px,#00ffa0 120px,#02ffa6 148px,#d1ffb8 204px,#fffebb 215px,#ffbc91 234px,#ff816b 262px,#ff4b4a 306px,#ff2231 366px,#ff0822 426px,#ff001b 467px,#ff0013 527px,#ff000d 587px,#ff0008 639px)"></div><div style="left:0;top:100px;width:640px;height:5px;background:linear-gradient(90deg,#00ff95 0px,#00ff9e 60px,#00ffab 120px,#04ffb3 149px,#d2ffc7 204px,#fffcca 215px,#ffba9d 234px,#ff7f74 262px,#ff4a50 306px,#ff2136 366px,#ff0726 426px,#ff001e 467px,#ff0016 527px,#ff000f 587px,#ff000b 639px)"></div><div style="left:0;top:104px;width:640px;height:5px;background:linear-gradient(90deg,#00ff9d 0px,#00ffa8 60px,#00ffb6 120px,#01ffc0 149px,#d3ffd7 204px,#fffbd9 215px,#ffb8a8 234px,#ff7d7d 262px,#ff4857 306px,#ff203a 366px,#ff062a 426px,#ff0020 473px,#ff0018 533px,#ff0011 593px,#ff000d 639px)"></div><div style="left:0;top:108px;width:640px;height:5px;background:linear-gradient(90deg,#00ffa5 0px,#00ffb2 60px,#00ffc2 120px,#03ffcd 150px,#d0ffe6 203px,#fffdec 214px,#ffbcb8 232px,#ff808a 259px,#ff4b61 301px,#ff2141 361px,#ff062f 421px,#ff0025 464px,#ff001c 524px,#ff0015 584px,#ff0010 639px)"></div><div style="left:0;top:112px;width:640px;height:5px;background:linear-gradient(90deg,#00ffae 0px,#00ffbb 60px,#00ffce 120px,#00ffda 150px,#d0fff7 203px,#fffcfb 214px,#ffbac5 232px,#ff7e93 259px,#ff4967 301px,#ff1f46 361px,#ff0533 421px,#ff0026 481px,#ff001d 541px,#ff0016 601px,#ff0012 639px)"></div><div style="left:0;top:116px;width:640px;height:5px;background:linear-gradient(90deg,#00ffb7 0px,#00ffc6 60px,#00ffda 120px,#01ffe8 151px,#b4faff 197px,#ffe9fc 218px,#ffa8c2 238px,#ff6e8f 268px,#ff3b63 316px,#ff1645 376px,#ff0033 436px,#ff0026 496px,#ff001d 556px,#ff0017 616px,#ff0014 639px)"></div><div style="left:0;top:120px;width:640px;height:5px;background:linear-gradient(90deg,#00ffbf 0px,#00ffd0 60px,#00ffe7 120px,#03fff7 152px,#62f8ff 177px,#ffd7fc 222px,#ff98c0 244px,#ff608d 277px,#ff2e5f 331px,#ff0e44 391px,#ff0036 437px,#ff0029 497px,#ff0020 557px,#ff0019 617px,#ff0017 639px)"></div><div style="left:0;top:124px;width:640px;height:5px;background:linear-gradient(90deg,#00ffc8 0px,#00ffda 60px,#00fff3 120px,#00f9ff 152px,#92e0ff 193px,#ffc7fc 226px,#ff8bc1 249px,#ff558b 285px,#ff245d 344px,#ff0743 404px,#ff0038 442px,#ff002b 502px,#ff0022 562px,#ff001b 622px,#ff0019 639px)"></div><div style="left:0;top:128px;width:640px;height:5px;background:linear-gradient(90deg,#00ffd1 0px,#00ffe5 60px,#00feff 120px,#01ebff 153px,#9ad0ff 198px,#ffb8fc 230px,#ff7fc1 254px,#ff4c8c 291px,#ff1f5f 351px,#ff0345 411px,#ff0035 471px,#ff0029 531px,#ff0021 591px,#ff001b 639px)"></div><div style="left:0;top:132px;width:640px;height:5px;background:linear-gradient(90deg,#00ffda 0px,#00fff0 60px,#00faff 104px,#03dfff 154px,#aebeff 207px,#ffaafc 234px,#ff75c1 259px,#ff448c 298px,#ff1960 358px,#ff0047 418px,#ff0037 478px,#ff002b 538px,#ff0022 598px,#ff001e 639px)"></div><div style="left:0;top:136px;width:640px;height:5px;background:linear-gradient(90deg,#00ffe3 0px,#00fffa 60px,#00e9ff 114px,#00d4ff 154px,#8bb9ff 198px,#ff9efd 238px,#ff6bc1 264px,#ff3c8d 304px,#ff1561 364px,#ff004a 419px,#ff0039 479px,#ff002e 539px,#ff0025 599px,#ff0020 639px)"></div><div style="left:0;top:140px;width:640px;height:5px;background:linear-gradient(90deg,#00ffed 0px,#00faff 57px,#00ddff 117px,#01c9ff 155px,#9daaff 207px,#ff92fd 242px,#ff61c1 269px,#ff358c 311px,#ff1063 371px,#ff004f 416px,#ff003d 476px,#ff0031 536px,#ff0028 596px,#ff0022 639px)"></div><div style="left:0;top:144px;width:640px;height:5px;background:linear-gradient(90deg,#00fff6 0px,#00f8ff 38px,#00dcff 98px,#03beff 156px,#af9bff 216px,#ff87fd 246px,#ff57c0 275px,#ff2d8b 319px,#ff0a63 379px,#ff0054 415px,#ff0041 475px,#ff0034 535px,#ff002a 595px,#ff0024 639px)"></div><div style="left:0;top:148px;width:640px;height:5px;background:linear-gradient(90deg,#00feff 0px,#00e5ff 60px,#00c8ff 120px,#04b5ff 157px,#a992ff 217px,#ff7cfd 250px,#ff4fc0 280px,#ff268b 326px,#ff0564 386px,#ff0052 429px,#ff0041 489px,#ff0034 549px,#ff002b 609px,#ff0027 639px)"></div><div style="left:0;top:152px;width:640px;height:5px;background:linear-gradient(90deg,#00f5ff 0px,#00dbff 60px,#00bfff 120px,#02adff 157px,#9d8cff 215px,#ff73fd 254px,#ff47c0 285px,#ff208c 332px,#ff0165 392px,#ff004e 452px,#ff003e 512px,#ff0033 572px,#ff002a 632px,#ff0029 639px)"></div><div style="left:0;top:156px;width:640px;height:5px;background:linear-gradient(90deg,#00ecff 0px,#00d3ff 60px,#00b7ff 120px,#03a4ff 158px,#9e83ff 218px,#ff6afd 258px,#ff40c1 290px,#ff1a8b 339px,#ff0067 398px,#ff0050 458px,#ff0040 518px,#ff0034 578px,#ff002b 638px,#ff002b 639px)"></div><div style="left:0;top:160px;width:640px;height:5px;background:linear-gradient(90deg,#00e3ff 0px,#00cbff 60px,#00b0ff 120px,#049cff 159px,#9a7cff 219px,#ff5ffb 263px,#ff38bf 296px,#ff148a 347px,#ff006d 394px,#ff0054 454px,#ff0044 514px,#ff0037 574px,#ff002e 634px,#ff002d 639px)"></div><div style="left:0;top:164px;width:640px;height:5px;background:linear-gradient(90deg,#00dcff 0px,#00c3ff 60px,#00a8ff 120px,#0296ff 159px,#9475ff 219px,#ff57fb 267px,#ff32c0 301px,#ff0e8a 354px,#ff0072 392px,#ff0058 452px,#ff0047 512px,#ff003a 572px,#ff0030 632px,#ff002f 639px)"></div><div style="left:0;top:168px;width:640px;height:5px;background:linear-gradient(90deg,#00d4ff 0px,#00bcff 60px,#00a2ff 120px,#038fff 160px,#906fff 220px,#ff50fb 271px,#ff2bc0 306px,#ff098b 360px,#ff0077 391px,#ff005c 451px,#ff004a 511px,#ff003d 571px,#ff0033 631px,#ff0032 639px)"></div><div style="left:0;top:172px;width:640px;height:5px;background:linear-gradient(90deg,#00cdff 0px,#00b5ff 60px,#009bff 120px,#0488ff 161px,#8d69ff 221px,#ff48fb 275px,#ff25bf 312px,#ff0389 369px,#ff0069 429px,#ff0053 489px,#ff0044 549px,#ff0039 609px,#ff0034 639px)"></div><div style="left:0;top:176px;width:640px;height:5px;background:linear-gradient(90deg,#00c6ff 0px,#00afff 60px,#0095ff 120px,#0282ff 161px,#8864ff 221px,#ff41fc 279px,#ff1fbf 317px,#ff008a 375px,#ff006a 435px,#ff0054 495px,#ff0045 555px,#ff003a 615px,#ff0036 639px)"></div><div style="left:0;top:180px;width:640px;height:5px;background:linear-gradient(90deg,#00c0ff 0px,#00a9ff 60px,#008fff 120px,#037cff 162px,#855eff 222px,#ff3cfe 282px,#ff1bc1 320px,#ff0090 373px,#ff006e 433px,#ff0058 493px,#ff0048 553px,#ff003c 613px,#ff0038 639px)"></div><div style="left:0;top:184px;width:640px;height:5px;background:linear-gradient(90deg,#00baff 0px,#00a3ff 60px,#008aff 120px,#0476ff 163px,#8259ff 223px,#fa37ff 283px,#ff29e6 299px,#ff0aac 345px,#ff0094 374px,#ff0071 434px,#ff005b 494px,#ff004b 554px,#ff003f 614px,#ff003a 639px)"></div><div style="left:0;top:188px;width:640px;height:5px;background:linear-gradient(90deg,#00b4ff 0px,#009dff 60px,#0085ff 120px,#0272ff 163px,#7e54ff 223px,#f233ff 283px,#ff2dfa 292px,#ff0fbe 333px,#ff009e 367px,#ff0078 427px,#ff0060 487px,#ff004f 547px,#ff0042 607px,#ff003d 639px)"></div><div style="left:0;top:192px;width:640px;height:5px;background:linear-gradient(90deg,#00aeff 0px,#0098ff 60px,#0080ff 120px,#036cff 164px,#7b50ff 224px,#ed2fff 284px,#ff27fa 296px,#ff0abe 338px,#ff00a5 365px,#ff007d 425px,#ff0064 485px,#ff0052 545px,#ff0045 605px,#ff003f 639px)"></div><div style="left:0;top:196px;width:640px;height:5px;background:linear-gradient(90deg,#00a9ff 0px,#0093ff 60px,#007bff 120px,#0467ff 165px,#794bff 225px,#e82bff 285px,#ff22fa 300px,#ff04bf 343px,#ff008e 403px,#ff006f 463px,#ff005b 523px,#ff004c 583px,#ff0041 639px)"></div><div style="left:0;top:200px;width:640px;height:5px;background:linear-gradient(90deg,#00a4ff 0px,#008eff 60px,#0076ff 120px,#0263ff 165px,#7547ff 225px,#e128ff 285px,#ff1cfa 304px,#ff00bf 348px,#ff008f 408px,#ff0071 468px,#ff005c 528px,#ff004d 588px,#ff0043 639px)"></div><div style="left:0;top:204px;width:640px;height:5px;background:linear-gradient(90deg,#009fff 0px,#0089ff 60px,#0072ff 120px,#035fff 166px,#7343ff 226px,#dd24ff 286px,#ff17fb 308px,#ff00c3 349px,#ff0092 409px,#ff0074 469px,#ff005f 529px,#ff004f 589px,#ff0045 639px)"></div><div style="left:0;top:208px;width:640px;height:5px;background:linear-gradient(90deg,#009aff 0px,#0085ff 60px,#006eff 120px,#035aff 167px,#713fff 227px,#d820ff 287px,#ff12fb 312px,#ff00cd 345px,#ff0099 405px,#ff0079 465px,#ff0063 525px,#ff0053 585px,#ff0047 639px)"></div><div style="left:0;top:212px;width:640px;height:5px;background:linear-gradient(90deg,#0095ff 0px,#0081ff 60px,#006aff 120px,#0456ff 168px,#6f3bff 228px,#d41dff 288px,#ff0cfb 316px,#ff00d6 342px,#ff009f 402px,#ff007d 462px,#ff0066 522px,#ff0056 582px,#ff004a 639px)"></div><div style="left:0;top:216px;width:640px;height:5px;background:linear-gradient(90deg,#0091ff 0px,#007cff 60px,#0066ff 120px,#0353ff 168px,#6c38ff 228px,#ce1aff 288px,#ff07fb 320px,#ff00db 343px,#ff00a3 403px,#ff0080 463px,#ff0069 523px,#ff0058 583px,#ff004c 639px)"></div><div style="left:0;top:220px;width:640px;height:5px;background:linear-gradient(90deg,#008dff 0px,#0078ff 60px,#0062ff 120px,#034fff 169px,#6a35ff 229px,#cb17ff 289px,#ff02fb 324px,#ff00bf 374px,#ff0093 434px,#ff0076 494px,#ff0062 554px,#ff0053 614px,#ff004e 639px)"></div><div style="left:0;top:224px;width:640px;height:5px;background:linear-gradient(90deg,#0089ff 0px,#0075ff 60px,#005fff 120px,#044bff 170px,#6931ff 230px,#c714ff 290px,#ff00fb 328px,#ff00bf 379px,#ff0094 439px,#ff0077 499px,#ff0063 559px,#ff0054 619px,#ff0050 639px)"></div><div style="left:0;top:228px;width:640px;height:5px;background:linear-gradient(90deg,#0085ff 0px,#0071ff 60px,#005bff 120px,#0348ff 170px,#662eff 230px,#c211ff 290px,#fb00ff 327px,#ff00bc 387px,#ff0093 447px,#ff0077 507px,#ff0064 567px,#ff0055 627px,#ff0052 639px)"></div><div style="left:0;top:232px;width:640px;height:5px;background:linear-gradient(90deg,#0081ff 0px,#006dff 60px,#0058ff 120px,#0345ff 171px,#642bff 231px,#bf0eff 291px,#f000ff 324px,#ff00fa 337px,#ff00bd 391px,#ff0094 451px,#ff0079 511px,#ff0065 571px,#ff0056 631px,#ff0054 639px)"></div><div style="left:0;top:236px;width:640px;height:5px;background:linear-gradient(90deg,#007eff 0px,#006aff 60px,#0055ff 120px,#0441ff 172px,#6328ff 232px,#bb0bff 292px,#e600ff 321px,#ff00fa 341px,#ff00bd 396px,#ff0095 456px,#ff007a 516px,#ff0066 576px,#ff0057 636px,#ff0057 639px)"></div><div style="left:0;top:240px;width:640px;height:5px;background:linear-gradient(90deg,#007aff 0px,#0067ff 60px,#0052ff 120px,#033eff 172px,#6026ff 232px,#b709ff 292px,#de00ff 319px,#ff00fc 344px,#ff00bf 399px,#ff0097 459px,#ff007b 519px,#ff0068 579px,#ff0059 639px)"></div><div style="left:0;top:244px;width:640px;height:5px;background:linear-gradient(90deg,#0077ff 0px,#0064ff 60px,#004fff 120px,#033bff 173px,#5f23ff 233px,#b406ff 293px,#dc00ff 321px,#ff00fc 348px,#ff00bf 404px,#ff0097 464px,#ff007c 524px,#ff0069 584px,#ff005b 639px)"></div><div style="left:0;top:248px;width:640px;height:5px;background:linear-gradient(90deg,#0073ff 0px,#0061ff 60px,#004cff 120px,#0438ff 174px,#5e20ff 234px,#b103ff 294px,#ff00fc 352px,#ff00c0 409px,#ff0098 469px,#ff007d 529px,#ff006a 589px,#ff005d 639px)"></div><div style="left:0;top:252px;width:640px;height:5px;background:linear-gradient(90deg,#0070ff 0px,#005eff 60px,#0049ff 120px,#0336ff 174px,#5b1eff 234px,#ad01ff 294px,#ff00ff 354px,#ff00c2 411px,#ff009a 471px,#ff007f 531px,#ff006c 591px,#ff005f 639px)"></div><div style="left:0;top:256px;width:640px;height:5px;background:linear-gradient(90deg,#006dff 0px,#005bff 60px,#0047ff 120px,#0333ff 175px,#5a1bff 235px,#ab00ff 295px,#fb00ff 355px,#ff00c3 415px,#ff009c 475px,#ff0080 535px,#ff006d 595px,#ff0061 639px)"></div><div style="left:0;top:260px;width:640px;height:5px;background:linear-gradient(90deg,#006aff 0px,#0058ff 60px,#0044ff 120px,#0430ff 176px,#5919ff 236px,#a800ff 296px,#f700ff 356px,#ff00f7 368px,#ff00bd 428px,#ff0098 488px,#ff007e 548px,#ff006c 608px,#ff0064 639px)"></div><div style="left:0;top:264px;width:640px;height:5px;background:linear-gradient(90deg,#0067ff 0px,#0055ff 60px,#0042ff 120px,#032eff 176px,#5716ff 236px,#a100ff 293px,#ee00ff 353px,#ff00fa 370px,#ff00bf 430px,#ff009a 490px,#ff0080 550px,#ff006d 610px,#ff0066 639px)"></div><div style="left:0;top:268px;width:640px;height:5px;background:linear-gradient(90deg,#0065ff 0px,#0053ff 60px,#003fff 120px,#032bff 177px,#5614ff 237px,#9a00ff 290px,#e600ff 350px,#ff00fb 373px,#ff00c1 433px,#ff009c 493px,#ff0082 553px,#ff006f 613px,#ff0068 639px)"></div><div style="left:0;top:272px;width:640px;height:5px;background:linear-gradient(90deg,#0062ff 0px,#0050ff 60px,#003dff 120px,#0429ff 178px,#5512ff 238px,#9100ff 286px,#dc00ff 346px,#ff00fb 377px,#ff00c2 437px,#ff009d 497px,#ff0083 557px,#ff0070 617px,#ff006a 639px)"></div><div style="left:0;top:276px;width:640px;height:5px;background:linear-gradient(90deg,#005fff 0px,#004eff 60px,#003bff 120px,#0426ff 179px,#540fff 239px,#8b00ff 283px,#d400ff 343px,#ff00fb 381px,#ff00c3 441px,#ff009e 501px,#ff0084 561px,#ff0071 621px,#ff006c 639px)"></div><div style="left:0;top:280px;width:640px;height:5px;background:linear-gradient(90deg,#005dff 0px,#004bff 60px,#0038ff 120px,#0324ff 179px,#520dff 239px,#8400ff 280px,#cc00ff 340px,#ff00fb 385px,#ff00c3 445px,#ff009f 505px,#ff0085 565px,#ff0072 625px,#ff006e 639px)"></div><div style="left:0;top:284px;width:640px;height:5px;background:linear-gradient(90deg,#005aff 0px,#0049ff 60px,#0036ff 120px,#0422ff 180px,#510bff 240px,#7e00ff 277px,#c500ff 337px,#ff00fb 389px,#ff00c4 449px,#ff00a0 509px,#ff0086 569px,#ff0073 629px,#ff0071 639px)"></div><div style="left:0;top:288px;width:640px;height:5px;background:linear-gradient(90deg,#0058ff 0px,#0047ff 60px,#0034ff 120px,#0220ff 180px,#4f09ff 240px,#7900ff 275px,#bf00ff 335px,#ff00fb 393px,#ff00c5 453px,#ff00a1 513px,#ff0087 573px,#ff0074 633px,#ff0073 639px)"></div><div style="left:0;top:292px;width:640px;height:5px;background:linear-gradient(90deg,#0055ff 0px,#0044ff 60px,#0032ff 120px,#011eff 180px,#4d08ff 240px,#7500ff 274px,#ba00ff 334px,#ff00ff 394px,#ff00c8 454px,#ff00a3 514px,#ff008a 574px,#ff0076 634px,#ff0075 639px)"></div><div style="left:0;top:296px;width:640px;height:5px;background:linear-gradient(90deg,#0053ff 0px,#0042ff 60px,#0030ff 120px,#001cff 180px,#4c06ff 240px,#7800ff 279px,#bc00ff 339px,#ff00fe 399px,#ff00c8 459px,#ff00a4 519px,#ff008a 579px,#ff0077 639px)"></div><div style="left:0;top:300px;width:640px;height:5px;background:linear-gradient(90deg,#0051ff 0px,#0040ff 60px,#002eff 120px,#001bff 180px,#4a04ff 240px,#8d00ff 300px,#d000ff 360px,#ff00fc 405px,#ff00c7 465px,#ff00a4 525px,#ff008b 585px,#ff0079 639px)"></div><div style="left:0;top:304px;width:640px;height:5px;background:linear-gradient(90deg,#004fff 0px,#003eff 60px,#002cff 120px,#0019ff 180px,#4802ff 240px,#8b00ff 300px,#cc00ff 360px,#ff00fc 409px,#ff00c8 469px,#ff00a5 529px,#ff008c 589px,#ff007b 639px)"></div><div style="left:0;top:308px;width:640px;height:5px;background:linear-gradient(90deg,#004dff 0px,#003cff 60px,#002bff 120px,#0017ff 180px,#4600ff 240px,#8800ff 300px,#c900ff 360px,#ff00fc 413px,#ff00c8 473px,#ff00a6 533px,#ff008d 593px,#ff007e 639px)"></div><div style="left:0;top:312px;width:640px;height:5px;background:linear-gradient(90deg,#004aff 0px,#003aff 60px,#0029ff 120px,#0016ff 180px,#4500ff 240px,#8500ff 300px,#c500ff 360px,#ff00fb 418px,#ff00c8 478px,#ff00a6 538px,#ff008d 598px,#ff0080 639px)"></div><div style="left:0;top:316px;width:640px;height:5px;background:linear-gradient(90deg,#0048ff 0px,#0038ff 60px,#0027ff 120px,#0014ff 180px,#4300ff 240px,#8300ff 300px,#c200ff 360px,#ff00fd 420px,#ff00ca 480px,#ff00a8 540px,#ff008f 600px,#ff0082 639px)"></div><div style="left:0;top:320px;width:640px;height:5px;background:linear-gradient(90deg,#0046ff 0px,#0036ff 60px,#0025ff 120px,#0012ff 180px,#1c09ff 206px,#4800ff 246px,#8700ff 306px,#c500ff 366px,#ff00fb 426px,#ff00ca 486px,#ff00a8 546px,#ff008f 606px,#ff0084 639px)"></div><div style="left:0;top:324px;width:640px;height:5px;background:linear-gradient(90deg,#0045ff 0px,#0035ff 60px,#0024ff 120px,#0011ff 180px,#120bff 198px,#4100ff 241px,#7f00ff 301px,#bc00ff 361px,#fa00ff 421px,#ff00ef 443px,#ff00c2 503px,#ff00a3 563px,#ff008c 623px,#ff0086 639px)"></div><div style="left:0;top:328px;width:640px;height:5px;background:linear-gradient(90deg,#0043ff 0px,#0033ff 60px,#0022ff 120px,#000fff 180px,#090bff 192px,#3b00ff 237px,#7900ff 297px,#b500ff 357px,#f200ff 417px,#ff00fa 435px,#ff00ca 495px,#ff00a9 555px,#ff0091 615px,#ff0089 639px)"></div><div style="left:0;top:332px;width:640px;height:5px;background:linear-gradient(90deg,#0041ff 0px,#0031ff 60px,#0020ff 120px,#000eff 180px,#090aff 192px,#3700ff 234px,#7400ff 294px,#af00ff 354px,#eb00ff 414px,#ff00fa 439px,#ff00cb 499px,#ff00aa 559px,#ff0091 619px,#ff008b 639px)"></div><div style="left:0;top:336px;width:640px;height:5px;background:linear-gradient(90deg,#003fff 0px,#0030ff 60px,#001fff 120px,#000cff 180px,#0808ff 192px,#3500ff 233px,#7100ff 293px,#ab00ff 353px,#e600ff 413px,#ff00fb 442px,#ff00cc 502px,#ff00ab 562px,#ff0093 622px,#ff008d 639px)"></div><div style="left:0;top:340px;width:640px;height:5px;background:linear-gradient(90deg,#003dff 0px,#002eff 60px,#001dff 120px,#000bff 180px,#0707ff 192px,#3400ff 234px,#7000ff 294px,#aa00ff 354px,#e400ff 414px,#ff00fb 446px,#ff00cc 506px,#ff00ac 566px,#ff0094 626px,#ff008f 639px)"></div><div style="left:0;top:344px;width:640px;height:5px;background:linear-gradient(90deg,#003cff 0px,#002cff 60px,#001cff 120px,#0009ff 180px,#0705ff 193px,#4600ff 253px,#8000ff 313px,#b900ff 373px,#f200ff 433px,#ff00f9 452px,#ff00cc 512px,#ff00ac 572px,#ff0094 632px,#ff0091 639px)"></div><div style="left:0;top:348px;width:640px;height:5px;background:linear-gradient(90deg,#003aff 0px,#002bff 60px,#001aff 120px,#0008ff 180px,#0603ff 193px,#4400ff 253px,#7e00ff 313px,#b600ff 373px,#ef00ff 433px,#ff00fa 455px,#ff00cd 515px,#ff00ad 575px,#ff0095 635px,#ff0094 639px)"></div><div style="left:0;top:352px;width:640px;height:5px;background:linear-gradient(90deg,#0038ff 0px,#0029ff 60px,#0019ff 120px,#0006ff 180px,#0502ff 193px,#4300ff 253px,#7c00ff 313px,#b300ff 373px,#eb00ff 433px,#ff00fb 459px,#ff00cd 519px,#ff00ae 579px,#ff0096 639px)"></div><div style="left:0;top:356px;width:640px;height:5px;background:linear-gradient(90deg,#0037ff 0px,#0028ff 60px,#0018ff 120px,#0005ff 180px,#0600ff 194px,#4300ff 254px,#7a00ff 314px,#b100ff 374px,#e900ff 434px,#ff00fb 463px,#ff00ce 523px,#ff00ae 583px,#ff0098 639px)"></div><div style="left:0;top:360px;width:640px;height:5px;background:linear-gradient(90deg,#0035ff 0px,#0026ff 60px,#0016ff 120px,#0004ff 180px,#0500ff 194px,#4100ff 254px,#7800ff 314px,#af00ff 374px,#e500ff 434px,#ff00fb 467px,#ff00ce 527px,#ff00af 587px,#ff009a 639px)"></div><div style="left:0;top:364px;width:640px;height:5px;background:linear-gradient(90deg,#0034ff 0px,#0025ff 60px,#0015ff 120px,#0002ff 180px,#0500ff 195px,#4100ff 255px,#7700ff 315px,#ad00ff 375px,#e300ff 435px,#ff00fb 471px,#ff00cf 531px,#ff00b0 591px,#ff009c 639px)"></div><div style="left:0;top:368px;width:640px;height:5px;background:linear-gradient(90deg,#0032ff 0px,#0023ff 60px,#0013ff 120px,#0001ff 180px,#0600ff 196px,#4000ff 256px,#7600ff 316px,#ab00ff 376px,#e000ff 436px,#ff00fb 475px,#ff00cf 535px,#ff00b0 595px,#ff009f 639px)"></div><div style="left:0;top:372px;width:640px;height:5px;background:linear-gradient(90deg,#0031ff 0px,#0022ff 60px,#0012ff 120px,#0000ff 180px,#0500ff 196px,#3f00ff 256px,#7400ff 316px,#a900ff 376px,#dd00ff 436px,#ff00fb 479px,#ff00d0 539px,#ff00b1 599px,#ff00a1 639px)"></div><div style="left:0;top:376px;width:640px;height:5px;background:linear-gradient(90deg,#002fff 0px,#0021ff 60px,#0011ff 120px,#0000ff 180px,#0500ff 197px,#3f00ff 257px,#7300ff 317px,#a700ff 377px,#db00ff 437px,#ff00fb 483px,#ff00d0 543px,#ff00b2 603px,#ff00a3 639px)"></div><div style="left:0;top:380px;width:640px;height:5px;background:linear-gradient(90deg,#002eff 0px,#001fff 60px,#0010ff 120px,#0000ff 180px,#0600ff 198px,#3e00ff 258px,#7200ff 318px,#a600ff 378px,#d900ff 438px,#ff00fb 487px,#ff00d1 547px,#ff00b2 607px,#ff00a5 639px)"></div><div style="left:0;top:384px;width:640px;height:5px;background:linear-gradient(90deg,#002cff 0px,#001eff 60px,#000eff 120px,#0000ff 180px,#0500ff 198px,#3d00ff 258px,#7100ff 318px,#a300ff 378px,#d600ff 438px,#ff00fb 491px,#ff00d1 551px,#ff00b3 611px,#ff00a7 639px)"></div><div style="left:0;top:388px;width:640px;height:5px;background:linear-gradient(90deg,#002bff 0px,#001dff 60px,#000dff 120px,#0000ff 180px,#0500ff 199px,#3d00ff 259px,#7000ff 319px,#a200ff 379px,#d400ff 439px,#ff00fb 495px,#ff00d2 555px,#ff00b4 615px,#ff00aa 639px)"></div><div style="left:0;top:392px;width:640px;height:5px;background:linear-gradient(90deg,#002aff 0px,#001bff 60px,#000cff 120px,#0000ff 177px,#0400ff 199px,#3c00ff 259px,#6e00ff 319px,#a000ff 379px,#d100ff 439px,#ff00fb 499px,#ff00d2 559px,#ff00b4 619px,#ff00ac 639px)"></div><div style="left:0;top:396px;width:640px;height:5px;background:linear-gradient(90deg,#0028ff 0px,#001aff 60px,#000bff 120px,#0000ff 174px,#0500ff 200px,#3b00ff 260px,#6d00ff 320px,#9e00ff 380px,#cf00ff 440px,#ff00fe 500px,#ff00d4 560px,#ff00b6 620px,#ff00ae 639px)"></div><div style="left:0;top:400px;width:640px;height:5px;background:linear-gradient(90deg,#0027ff 0px,#0019ff 60px,#0009ff 120px,#0000ff 172px,#0400ff 200px,#3a00ff 260px,#6c00ff 320px,#9c00ff 380px,#cc00ff 440px,#fd00ff 500px,#ff00d7 560px,#ff00b8 620px,#ff00b0 639px)"></div><div style="left:0;top:404px;width:640px;height:5px;background:linear-gradient(90deg,#0026ff 0px,#0018ff 60px,#0008ff 120px,#0000ff 170px,#0400ff 201px,#3a00ff 261px,#6b00ff 321px,#9b00ff 381px,#cb00ff 441px,#fb00ff 501px,#ff00d9 561px,#ff00ba 621px,#ff00b3 639px)"></div><div style="left:0;top:408px;width:640px;height:5px;background:linear-gradient(90deg,#0024ff 0px,#0016ff 60px,#0007ff 120px,#0000ff 172px,#0500ff 202px,#3a00ff 262px,#6a00ff 322px,#9900ff 382px,#c900ff 442px,#f800ff 502px,#ff00f5 524px,#ff00cf 584px,#ff00b5 639px)"></div><div style="left:0;top:412px;width:640px;height:5px;background:linear-gradient(90deg,#0023ff 0px,#0015ff 60px,#0006ff 120px,#0000ff 180px,#0500ff 203px,#3900ff 263px,#6900ff 323px,#9800ff 383px,#c700ff 443px,#f600ff 503px,#ff00f8 524px,#ff00d1 584px,#ff00b7 639px)"></div><div style="left:0;top:416px;width:640px;height:5px;background:linear-gradient(90deg,#0022ff 0px,#0014ff 60px,#0005ff 120px,#0000ff 180px,#0400ff 203px,#3800ff 263px,#6800ff 323px,#9600ff 383px,#c400ff 443px,#f300ff 503px,#ff00f9 526px,#ff00d3 586px,#ff00b9 639px)"></div><div style="left:0;top:420px;width:640px;height:5px;background:linear-gradient(90deg,#0021ff 0px,#0013ff 60px,#0003ff 120px,#0000ff 180px,#0500ff 204px,#3800ff 264px,#6700ff 324px,#9500ff 384px,#c300ff 444px,#f100ff 504px,#ff00fa 529px,#ff00d4 589px,#ff00bc 639px)"></div><div style="left:0;top:424px;width:640px;height:5px;background:linear-gradient(90deg,#0020ff 0px,#0012ff 60px,#0002ff 120px,#0000ff 180px,#0500ff 205px,#3800ff 265px,#6600ff 325px,#9400ff 385px,#c100ff 445px,#ef00ff 505px,#ff00fa 533px,#ff00d4 593px,#ff00be 639px)"></div><div style="left:0;top:428px;width:640px;height:5px;background:linear-gradient(90deg,#001eff 0px,#0011ff 60px,#0001ff 120px,#0000ff 180px,#0400ff 205px,#3700ff 265px,#6500ff 325px,#9200ff 385px,#bf00ff 445px,#ec00ff 505px,#ff00fa 537px,#ff00d5 597px,#ff00c0 639px)"></div><div style="left:0;top:432px;width:640px;height:5px;background:linear-gradient(90deg,#001dff 0px,#0010ff 60px,#0000ff 120px,#0000ff 180px,#0400ff 206px,#3600ff 266px,#6400ff 326px,#9100ff 386px,#bd00ff 446px,#ea00ff 506px,#ff00fa 541px,#ff00d5 601px,#ff00c2 639px)"></div><div style="left:0;top:436px;width:640px;height:5px;background:linear-gradient(90deg,#001cff 0px,#000fff 60px,#0000ff 120px,#0000ff 180px,#0500ff 207px,#3600ff 267px,#6300ff 327px,#9000ff 387px,#bc00ff 447px,#e800ff 507px,#ff00fa 545px,#ff00d5 605px,#ff00c5 639px)"></div><div style="left:0;top:440px;width:640px;height:5px;background:linear-gradient(90deg,#001bff 0px,#000eff 60px,#0000ff 120px,#0000ff 180px,#0400ff 207px,#3500ff 267px,#6200ff 327px,#8e00ff 387px,#b900ff 447px,#e500ff 507px,#ff00fa 549px,#ff00d6 609px,#ff00c7 639px)"></div><div style="left:0;top:444px;width:640px;height:5px;background:linear-gradient(90deg,#001aff 0px,#000dff 60px,#0000ff 120px,#0000ff 180px,#0400ff 208px,#3500ff 268px,#6100ff 328px,#8d00ff 388px,#b800ff 448px,#e300ff 508px,#ff00fa 553px,#ff00d6 613px,#ff00c9 639px)"></div><div style="left:0;top:448px;width:640px;height:5px;background:linear-gradient(90deg,#0019ff 0px,#000bff 60px,#0000ff 120px,#0000ff 180px,#0500ff 209px,#3500ff 269px,#6100ff 329px,#8c00ff 389px,#b600ff 449px,#e100ff 509px,#ff00fa 557px,#ff00d6 617px,#ff00cc 639px)"></div><div style="left:0;top:452px;width:640px;height:5px;background:linear-gradient(90deg,#0018ff 0px,#000aff 60px,#0000ff 120px,#0000ff 180px,#0400ff 209px,#3400ff 269px,#5f00ff 329px,#8a00ff 389px,#b400ff 449px,#df00ff 509px,#ff00fb 561px,#ff00d7 621px,#ff00ce 639px)"></div><div style="left:0;top:456px;width:640px;height:5px;background:linear-gradient(90deg,#0017ff 0px,#0009ff 60px,#0000ff 120px,#0000ff 180px,#0400ff 210px,#3400ff 270px,#5f00ff 330px,#8900ff 390px,#b300ff 450px,#dd00ff 510px,#ff00fb 565px,#ff00d7 625px,#ff00d0 639px)"></div><div style="left:0;top:460px;width:640px;height:5px;background:linear-gradient(90deg,#0016ff 0px,#0008ff 60px,#0000ff 120px,#0000ff 180px,#0500ff 211px,#3300ff 271px,#5e00ff 331px,#8800ff 391px,#b100ff 451px,#db00ff 511px,#ff00fb 569px,#ff00d7 629px,#ff00d3 639px)"></div><div style="left:0;top:464px;width:640px;height:5px;background:linear-gradient(90deg,#0015ff 0px,#0007ff 60px,#0000ff 120px,#0000ff 180px,#0400ff 211px,#3300ff 271px,#5d00ff 331px,#8600ff 391px,#af00ff 451px,#d900ff 511px,#ff00fc 571px,#ff00d9 631px,#ff00d5 639px)"></div><div style="left:0;top:468px;width:640px;height:5px;background:linear-gradient(90deg,#0014ff 0px,#0006ff 60px,#0000ff 120px,#0000ff 180px,#0400ff 212px,#3200ff 272px,#5c00ff 332px,#8500ff 392px,#ae00ff 452px,#d700ff 512px,#ff00fe 572px,#ff00db 632px,#ff00d7 639px)"></div><div style="left:0;top:472px;width:640px;height:5px;background:linear-gradient(90deg,#0013ff 0px,#0005ff 60px,#0000ff 120px,#0000ff 180px,#0500ff 213px,#3200ff 273px,#5c00ff 333px,#8400ff 393px,#ad00ff 453px,#d500ff 513px,#fe00ff 573px,#ff00dc 633px,#ff00d9 639px)"></div><div style="left:0;top:476px;width:640px;height:5px;background:linear-gradient(90deg,#0012ff 0px,#0004ff 60px,#0000ff 120px,#0000ff 180px,#0400ff 213px,#3100ff 273px,#5b00ff 333px,#8300ff 393px,#ab00ff 453px,#d300ff 513px,#fb00ff 573px,#ff00df 633px,#ff00dc 639px)"></div><div style="left:0;top:480px;width:640px;height:5px;background:linear-gradient(90deg,#0011ff 0px,#0003ff 60px,#0000ff 120px,#0000ff 180px,#0400ff 214px,#3100ff 274px,#5a00ff 334px,#8200ff 394px,#aa00ff 454px,#d100ff 514px,#f900ff 574px,#ff00f3 602px,#ff00de 639px)"></div><div style="left:0;top:484px;width:640px;height:5px;background:linear-gradient(90deg,#0010ff 0px,#0003ff 60px,#0000ff 120px,#0000ff 180px,#0500ff 215px,#3100ff 275px,#5a00ff 335px,#8200ff 395px,#a900ff 455px,#d000ff 515px,#f800ff 575px,#ff00f6 600px,#ff00e0 639px)"></div><div style="left:0;top:488px;width:640px;height:5px;background:linear-gradient(90deg,#0010ff 0px,#0003ff 60px,#0000ff 120px,#0000ff 180px,#0500ff 215px,#3100ff 275px,#5a00ff 335px,#8200ff 395px,#a900ff 455px,#d000ff 515px,#f800ff 575px,#ff00f6 600px,#ff00e0 639px)"></div><div style="left:0;top:492px;width:640px;height:5px;background:linear-gradient(90deg,#0010ff 0px,#0003ff 60px,#0000ff 120px,#0000ff 180px,#0500ff 215px,#3100ff 275px,#5a00ff 335px,#8200ff 395px,#a900ff 455px,#d000ff 515px,#f800ff 575px,#ff00f6 600px,#ff00e0 639px)"></div><div style="left:0;top:496px;width:640px;height:5px;background:linear-gradient(90deg,#0010ff 0px,#0003ff 60px,#0000ff 120px,#0000ff 180px,#0500ff 215px,#3100ff 275px,#5a00ff 335px,#8200ff 395px,#a900ff 455px,#d000ff 515px,#f800ff 575px,#ff00f6 600px,#ff00e0 639px)"></div></div></div>
</div>
<div style="left:1007.5px;top:78px;width:620.0px;height:1px;background:#8a8a8a"></div>
<div style="left:1626.5px;top:78px;width:1px;height:477px;background:#8a8a8a"></div>
<div style="left:1007.5px;top:78px;width:1px;height:483px;background:#8a8a8a"></div>
<div style="left:1001.5px;top:555px;width:626.0px;height:1px;background:#8a8a8a"></div>
<div style="left:1001.5px;top:554.5px;width:6px;height:1.5px;background:#8a8a8a"></div>
<div style="left:951.5px;top:549.6px;width:50px;text-align:right;font-size:14px;line-height:14px;color:#d6d6d6;white-space:nowrap;">0</div>
<div style="left:982.5px;top:565.1px;width:50px;text-align:center;font-size:14px;line-height:14px;color:#d6d6d6;white-space:nowrap;">0</div>
<div style="left:1001.5px;top:514.75px;width:6px;height:1.5px;background:#8a8a8a"></div>
<div style="left:951.5px;top:509.9px;width:50px;text-align:right;font-size:14px;line-height:14px;color:#d6d6d6;white-space:nowrap;">0,05</div>
<div style="left:1058.625px;top:555px;width:1px;height:6px;background:#8a8a8a"></div>
<div style="left:1034.1px;top:565.1px;width:50px;text-align:center;font-size:14px;line-height:14px;color:#d6d6d6;white-space:nowrap;">0,05</div>
<div style="left:1001.5px;top:475.0px;width:6px;height:1.5px;background:#8a8a8a"></div>
<div style="left:951.5px;top:470.1px;width:50px;text-align:right;font-size:14px;line-height:14px;color:#d6d6d6;white-space:nowrap;">0,1</div>
<div style="left:1110.25px;top:555px;width:1px;height:6px;background:#8a8a8a"></div>
<div style="left:1085.8px;top:565.1px;width:50px;text-align:center;font-size:14px;line-height:14px;color:#d6d6d6;white-space:nowrap;">0,1</div>
<div style="left:1001.5px;top:435.25px;width:6px;height:1.5px;background:#8a8a8a"></div>
<div style="left:951.5px;top:430.4px;width:50px;text-align:right;font-size:14px;line-height:14px;color:#d6d6d6;white-space:nowrap;">0,15</div>
<div style="left:1161.875px;top:555px;width:1px;height:6px;background:#8a8a8a"></div>
<div style="left:1137.4px;top:565.1px;width:50px;text-align:center;font-size:14px;line-height:14px;color:#d6d6d6;white-space:nowrap;">0,15</div>
<div style="left:1001.5px;top:395.5px;width:6px;height:1.5px;background:#8a8a8a"></div>
<div style="left:951.5px;top:390.6px;width:50px;text-align:right;font-size:14px;line-height:14px;color:#d6d6d6;white-space:nowrap;">0,2</div>
<div style="left:1213.5px;top:555px;width:1px;height:6px;background:#8a8a8a"></div>
<div style="left:1189.0px;top:565.1px;width:50px;text-align:center;font-size:14px;line-height:14px;color:#d6d6d6;white-space:nowrap;">0,2</div>
<div style="left:1001.5px;top:355.75px;width:6px;height:1.5px;background:#8a8a8a"></div>
<div style="left:951.5px;top:350.9px;width:50px;text-align:right;font-size:14px;line-height:14px;color:#d6d6d6;white-space:nowrap;">0,25</div>
<div style="left:1265.125px;top:555px;width:1px;height:6px;background:#8a8a8a"></div>
<div style="left:1240.6px;top:565.1px;width:50px;text-align:center;font-size:14px;line-height:14px;color:#d6d6d6;white-space:nowrap;">0,25</div>
<div style="left:1001.5px;top:316.0px;width:6px;height:1.5px;background:#8a8a8a"></div>
<div style="left:951.5px;top:311.1px;width:50px;text-align:right;font-size:14px;line-height:14px;color:#d6d6d6;white-space:nowrap;">0,3</div>
<div style="left:1316.75px;top:555px;width:1px;height:6px;background:#8a8a8a"></div>
<div style="left:1292.2px;top:565.1px;width:50px;text-align:center;font-size:14px;line-height:14px;color:#d6d6d6;white-space:nowrap;">0,3</div>
<div style="left:1001.5px;top:276.25px;width:6px;height:1.5px;background:#8a8a8a"></div>
<div style="left:951.5px;top:271.4px;width:50px;text-align:right;font-size:14px;line-height:14px;color:#d6d6d6;white-space:nowrap;">0,35</div>
<div style="left:1368.375px;top:555px;width:1px;height:6px;background:#8a8a8a"></div>
<div style="left:1343.9px;top:565.1px;width:50px;text-align:center;font-size:14px;line-height:14px;color:#d6d6d6;white-space:nowrap;">0,35</div>
<div style="left:1001.5px;top:236.5px;width:6px;height:1.5px;background:#8a8a8a"></div>
<div style="left:951.5px;top:231.6px;width:50px;text-align:right;font-size:14px;line-height:14px;color:#d6d6d6;white-space:nowrap;">0,4</div>
<div style="left:1420.0px;top:555px;width:1px;height:6px;background:#8a8a8a"></div>
<div style="left:1395.5px;top:565.1px;width:50px;text-align:center;font-size:14px;line-height:14px;color:#d6d6d6;white-space:nowrap;">0,4</div>
<div style="left:1001.5px;top:196.75px;width:6px;height:1.5px;background:#8a8a8a"></div>
<div style="left:951.5px;top:191.9px;width:50px;text-align:right;font-size:14px;line-height:14px;color:#d6d6d6;white-space:nowrap;">0,45</div>
<div style="left:1471.625px;top:555px;width:1px;height:6px;background:#8a8a8a"></div>
<div style="left:1447.1px;top:565.1px;width:50px;text-align:center;font-size:14px;line-height:14px;color:#d6d6d6;white-space:nowrap;">0,45</div>
<div style="left:1001.5px;top:157.0px;width:6px;height:1.5px;background:#8a8a8a"></div>
<div style="left:951.5px;top:152.1px;width:50px;text-align:right;font-size:14px;line-height:14px;color:#d6d6d6;white-space:nowrap;">0,5</div>
<div style="left:1523.25px;top:555px;width:1px;height:6px;background:#8a8a8a"></div>
<div style="left:1498.8px;top:565.1px;width:50px;text-align:center;font-size:14px;line-height:14px;color:#d6d6d6;white-space:nowrap;">0,5</div>
<div style="left:1001.5px;top:117.24999999999994px;width:6px;height:1.5px;background:#8a8a8a"></div>
<div style="left:951.5px;top:112.4px;width:50px;text-align:right;font-size:14px;line-height:14px;color:#d6d6d6;white-space:nowrap;">0,55</div>
<div style="left:1574.875px;top:555px;width:1px;height:6px;background:#8a8a8a"></div>
<div style="left:1550.4px;top:565.1px;width:50px;text-align:center;font-size:14px;line-height:14px;color:#d6d6d6;white-space:nowrap;">0,55</div>
<svg style="left:0;top:0" width="1649" height="897"><rect x="1466.3" y="132.8" width="13" height="13" fill="none" stroke="#f0f0f0" stroke-width="1.8"/><rect x="1130.1" y="101.3" width="13" height="13" fill="none" stroke="#f0f0f0" stroke-width="1.8"/><rect x="1182.1" y="423.0" width="13" height="13" fill="none" stroke="#f0f0f0" stroke-width="1.8"/><rect x="1143.8" y="186.4" width="13" height="13" fill="none" stroke="#f0f0f0" stroke-width="1.8"/><rect x="1315.9" y="286.3" width="13" height="13" fill="none" stroke="#f0f0f0" stroke-width="1.8"/><rect x="1211.5" y="108.9" width="13" height="13" fill="none" stroke="#f0f0f0" stroke-width="1.8"/><rect x="1206.2" y="177.2" width="11.5" height="11.5" fill="#f4f2fa" fill-opacity="0.6" stroke="#111" stroke-width="2.6"/><circle cx="1463.4" cy="135.4" r="4.3" fill="#c00000" stroke="#111" stroke-width="1.2"/><circle cx="1150.2" cy="100.5" r="4.3" fill="#20a020" stroke="#111" stroke-width="1.2"/><circle cx="1184.7" cy="415.3" r="4.3" fill="#0010d0" stroke="#111" stroke-width="1.2"/><circle cx="1160.3" cy="193.1" r="4.3" fill="#20b0b0" stroke="#111" stroke-width="1.2"/><circle cx="1283.1" cy="317.1" r="4.3" fill="#c000c0" stroke="#111" stroke-width="1.2"/><circle cx="1211.4" cy="107.0" r="4.3" fill="#c8c000" stroke="#111" stroke-width="1.2"/><circle cx="1203.1" cy="185.3" r="4.3" fill="#ddd" stroke="#111" stroke-width="1.2"/><circle cx="1204.9" cy="184.1" r="4.3" fill="#fff" stroke="#111" stroke-width="1.2"/></svg>
<div style="left:1379.7px;top:524px;width:243.7px;height:26px;background:#333333"></div>
<div style="left:1380.5px;top:528.9px;font-size:19px;line-height:19px;color:#f2f2f2;white-space:nowrap;">Gamut Coverage:&nbsp; 89,4%</div>
<div style="left:37px;top:628.8px;font-size:28.5px;line-height:28.5px;color:#f2f0ea;white-space:nowrap;-webkit-text-stroke:0.3px #f2f0ea;letter-spacing:0.35px">Current Reading</div>
<div style="left:37.5px;top:700.3px;font-size:24px;line-height:24px;color:#f2f0ea;white-space:nowrap;-webkit-text-stroke:0.3px #f2f0ea;">x: 0,3022</div>
<div style="left:188.7px;top:700.3px;font-size:24px;line-height:24px;color:#f2f0ea;white-space:nowrap;-webkit-text-stroke:0.3px #f2f0ea;">y: 0,3286</div>
<div style="left:37.5px;top:739.7px;font-size:24px;line-height:24px;color:#f2f0ea;white-space:nowrap;-webkit-text-stroke:0.3px #f2f0ea;">fL: 141,48</div>
<div style="left:37.5px;top:778.5px;font-size:24px;line-height:24px;color:#f2f0ea;white-space:nowrap;-webkit-text-stroke:0.3px #f2f0ea;letter-spacing:0.5px">cd/m²: 484,75</div>
<div style="left:274.0px;top:610.4px;width:400px;text-align:center;font-size:13.5px;line-height:13.5px;color:#d6d6d6;white-space:nowrap;">RGB Balance</div>
<div style="left:364.8px;top:627px;width:245.7px;height:174.5px;box-sizing:border-box;border:1px solid #8a8a8a;background:#242424"></div>
<div style="left:358.8px;top:627.0px;width:6px;height:1.5px;background:#8a8a8a"></div>
<div style="left:319.8px;top:621.1px;width:40px;text-align:right;font-size:14px;line-height:14px;color:#d6d6d6;white-space:nowrap;">20</div>
<div style="left:364.8px;top:670.375px;width:245.7px;height:1px;background:#8a8a8a"></div>
<div style="left:358.8px;top:670.375px;width:6px;height:1.5px;background:#8a8a8a"></div>
<div style="left:319.8px;top:664.5px;width:40px;text-align:right;font-size:14px;line-height:14px;color:#d6d6d6;white-space:nowrap;">10</div>
<div style="left:364.8px;top:713.75px;width:245.7px;height:1px;background:#8a8a8a"></div>
<div style="left:358.8px;top:713.75px;width:6px;height:1.5px;background:#8a8a8a"></div>
<div style="left:319.8px;top:707.9px;width:40px;text-align:right;font-size:14px;line-height:14px;color:#d6d6d6;white-space:nowrap;">0</div>
<div style="left:364.8px;top:757.125px;width:245.7px;height:1px;background:#8a8a8a"></div>
<div style="left:358.8px;top:757.125px;width:6px;height:1.5px;background:#8a8a8a"></div>
<div style="left:319.8px;top:751.3px;width:40px;text-align:right;font-size:14px;line-height:14px;color:#d6d6d6;white-space:nowrap;">-10</div>
<div style="left:358.8px;top:800.5px;width:6px;height:1.5px;background:#8a8a8a"></div>
<div style="left:319.8px;top:794.6px;width:40px;text-align:right;font-size:14px;line-height:14px;color:#d6d6d6;white-space:nowrap;">-20</div>
<div style="left:364.8px;top:800.5px;width:1.5px;height:7px;background:#8a8a8a"></div>
<div style="left:609.0px;top:800.5px;width:1.5px;height:7px;background:#8a8a8a"></div>
<div style="left:287.0px;top:805.1px;width:400px;text-align:center;font-size:14px;line-height:14px;color:#d6d6d6;white-space:nowrap;">100W</div>
<div style="left:389.7px;top:713.75px;width:65px;height:62.75px;box-sizing:border-box;border:1px solid #000;background:linear-gradient(#ff6060,#ff0000 20%,#f00000 50%,#c00000 80%,#700000)"></div>
<div style="left:455.6px;top:698.6px;width:65.2px;height:16.149999999999977px;box-sizing:border-box;border:1px solid #000;background:linear-gradient(#0a8a0a,#007800 60%,#005800)"></div>
<div style="left:520.6px;top:697.4px;width:66.2px;height:17.350000000000023px;box-sizing:border-box;border:1px solid #000;background:linear-gradient(#3030ff,#0000ff 40%,#0000d0 80%,#000090)"></div>
<div style="left:603.7px;top:602.7px;width:400px;text-align:center;font-size:13.5px;line-height:13.5px;color:#d6d6d6;white-space:nowrap;">CIE 1931 xy</div>
<div style="left:638.5px;top:618px;width:330px;height:192px;overflow:hidden;background:#ddd"><div style="left:-10px;top:-10px;width:350px;height:212px;filter:blur(2px)"><div style="left:0;top:0px;width:350px;height:9px;background:linear-gradient(90deg,#7bffc6 0px,#94ffc5 60px,#aeffc4 120px,#caffc3 180px,#e7ffc1 240px,#fffabc 296px,#ffe1a8 349px)"></div><div style="left:0;top:8px;width:350px;height:9px;background:linear-gradient(90deg,#7effca 0px,#97ffc9 60px,#b1ffc8 120px,#cdffc7 180px,#ebffc5 240px,#fffac1 287px,#ffdeaa 347px,#ffdda9 349px)"></div><div style="left:0;top:16px;width:350px;height:9px;background:linear-gradient(90deg,#81ffce 0px,#9affcd 60px,#b5ffcc 120px,#d1ffcb 180px,#f0ffca 240px,#fffac5 279px,#ffddad 339px,#ffd9aa 349px)"></div><div style="left:0;top:24px;width:350px;height:9px;background:linear-gradient(90deg,#84ffd2 0px,#9dffd1 60px,#b8ffd0 120px,#d5ffcf 180px,#f4ffce 240px,#fff9c9 272px,#ffdcb1 332px,#ffd5ab 349px)"></div><div style="left:0;top:32px;width:350px;height:9px;background:linear-gradient(90deg,#86ffd6 0px,#a0ffd6 60px,#bcffd5 120px,#daffd4 180px,#f9ffd3 240px,#fff3c8 274px,#ffd7b1 334px,#ffd1ab 349px)"></div><div style="left:0;top:40px;width:350px;height:9px;background:linear-gradient(90deg,#89ffdb 0px,#a4ffda 60px,#c0ffd9 120px,#deffd8 180px,#feffd7 240px,#ffe2be 300px,#ffcdac 349px)"></div><div style="left:0;top:48px;width:350px;height:9px;background:linear-gradient(90deg,#8cffdf 0px,#a7ffde 60px,#c4ffde 120px,#e2ffdd 180px,#fffcd9 240px,#ffdebf 300px,#ffcaad 349px)"></div><div style="left:0;top:56px;width:350px;height:9px;background:linear-gradient(90deg,#90ffe3 0px,#abffe3 60px,#c8ffe2 120px,#e7ffe2 180px,#fffbdd 233px,#ffddc2 293px,#ffc6ae 349px)"></div><div style="left:0;top:64px;width:350px;height:9px;background:linear-gradient(90deg,#93ffe8 0px,#aeffe8 60px,#ccffe7 120px,#ebffe7 180px,#fffae2 225px,#ffdcc6 285px,#ffc4b0 345px,#ffc2ae 349px)"></div><div style="left:0;top:72px;width:350px;height:9px;background:linear-gradient(90deg,#96ffed 0px,#b2ffec 60px,#d0ffec 120px,#f0ffeb 180px,#fffae6 217px,#ffdcca 277px,#ffc3b3 337px,#ffbfaf 349px)"></div><div style="left:0;top:80px;width:350px;height:9px;background:linear-gradient(90deg,#99fff1 0px,#b6fff1 60px,#d4fff1 120px,#f5fff1 180px,#fff9ea 210px,#ffdbce 270px,#ffc2b6 330px,#ffbbb0 349px)"></div><div style="left:0;top:88px;width:350px;height:9px;background:linear-gradient(90deg,#9dfff6 0px,#bafff6 60px,#d9fff6 120px,#fafff6 180px,#fff0e7 217px,#ffd3cc 277px,#ffbcb5 337px,#ffb7b0 349px)"></div><div style="left:0;top:96px;width:350px;height:9px;background:linear-gradient(90deg,#a0fffb 0px,#befffb 60px,#ddfffb 120px,#fffffb 180px,#ffe0dd 240px,#ffc6c3 300px,#ffb4b1 349px)"></div><div style="left:0;top:104px;width:350px;height:9px;background:linear-gradient(90deg,#a3feff 0px,#c1fdff 60px,#e0fdff 120px,#fffafc 180px,#ffdcdd 240px,#ffc2c4 300px,#ffb0b2 349px)"></div><div style="left:0;top:112px;width:350px;height:9px;background:linear-gradient(90deg,#a3f9ff 0px,#c1f8ff 60px,#e0f8ff 120px,#fff5fc 180px,#ffd7de 240px,#ffbec4 300px,#ffadb2 349px)"></div><div style="left:0;top:120px;width:350px;height:9px;background:linear-gradient(90deg,#a4f4ff 0px,#c1f3ff 60px,#e0f3ff 120px,#fff0fd 180px,#ffd3de 240px,#ffbbc5 300px,#ffaab3 349px)"></div><div style="left:0;top:128px;width:350px;height:9px;background:linear-gradient(90deg,#a4efff 0px,#c1eeff 60px,#e0eeff 120px,#ffecfd 180px,#ffcfdf 240px,#ffb7c5 300px,#ffa6b4 349px)"></div><div style="left:0;top:136px;width:350px;height:9px;background:linear-gradient(90deg,#a4eaff 0px,#c1e9ff 60px,#e0e9ff 120px,#ffe7fe 180px,#ffcbdf 240px,#ffb3c6 300px,#ffa3b4 349px)"></div><div style="left:0;top:144px;width:350px;height:9px;background:linear-gradient(90deg,#a4e5ff 0px,#c1e4ff 60px,#e0e4ff 120px,#ffe2fe 180px,#ffc7e0 240px,#ffb0c7 300px,#ffa0b5 349px)"></div><div style="left:0;top:152px;width:350px;height:9px;background:linear-gradient(90deg,#a5e0ff 0px,#c1e0ff 60px,#dfdfff 120px,#ffddfe 180px,#ffc3e0 240px,#ffacc7 300px,#ff9cb6 349px)"></div><div style="left:0;top:160px;width:350px;height:9px;background:linear-gradient(90deg,#a5dcff 0px,#c1dbff 60px,#dfdaff 120px,#ffd9ff 180px,#ffbfe1 240px,#ffa9c8 300px,#ff99b6 349px)"></div><div style="left:0;top:168px;width:350px;height:9px;background:linear-gradient(90deg,#a5d7ff 0px,#c1d6ff 60px,#dfd5ff 120px,#ffd4ff 180px,#ffbbe1 240px,#ffa5c9 300px,#ff96b7 349px)"></div><div style="left:0;top:176px;width:350px;height:9px;background:linear-gradient(90deg,#a6d3ff 0px,#c1d2ff 60px,#dfd1ff 120px,#fecfff 180px,#ffb7e2 240px,#ffa2c9 300px,#ff93b8 349px)"></div><div style="left:0;top:184px;width:350px;height:9px;background:linear-gradient(90deg,#a6ceff 0px,#c2cdff 60px,#dfccff 120px,#fecbff 180px,#ffb3e2 240px,#ff9eca 300px,#ff90b8 349px)"></div><div style="left:0;top:192px;width:350px;height:9px;background:linear-gradient(90deg,#a6caff 0px,#c2c9ff 60px,#dfc8ff 120px,#fec6ff 180px,#ffafe3 240px,#ff9bca 300px,#ff8db9 349px)"></div><div style="left:0;top:200px;width:350px;height:9px;background:linear-gradient(90deg,#a6c6ff 0px,#c2c5ff 60px,#dfc3ff 120px,#fdc2ff 180px,#ffabe3 240px,#ff98cb 300px,#ff8aba 349px)"></div><div style="left:0;top:208px;width:350px;height:9px;background:linear-gradient(90deg,#a7c2ff 0px,#c2c1ff 60px,#dfbfff 120px,#fdbeff 180px,#ffa8e4 240px,#ff95cb 300px,#ff87ba 349px)"></div></div></div>
<div style="left:637.5px;top:617.6px;width:332px;height:193.5px;box-sizing:border-box;border:1.5px solid #8c8c8c"></div>
<svg style="left:0;top:0" width="1649" height="897"><rect x="796" y="706.5" width="13.5" height="13.5" fill="#fff" stroke="#000" stroke-width="2.6"/><circle cx="733.5" cy="714.5" r="4" fill="#fff" stroke="#111" stroke-width="1.2"/><circle cx="717.8" cy="723.8" r="4.8" fill="#b8b8b8" stroke="#222" stroke-width="1.2"/></svg>
<div style="left:986px;top:605.3px;width:14px;height:37.5px;background:#000"></div>
<div style="left:1000px;top:605.3px;width:598px;height:18.5px;background:#2e2e2e"></div>
<div style="left:1000px;top:623.8px;width:598px;height:19px;background:#151515"></div>
<div style="left:1000px;top:642.8px;width:598px;height:35.10000000000002px;background:#3c3c3c"></div>
<div style="left:986px;top:642.8px;width:14px;height:35.10000000000002px;background:linear-gradient(#222,#2b2b2b)"></div>
<div style="left:1000px;top:677.9px;width:598px;height:34.60000000000002px;background:#7b7b7b"></div>
<div style="left:986px;top:677.9px;width:14px;height:34.60000000000002px;background:linear-gradient(#222,#2b2b2b)"></div>
<div style="left:1000px;top:712.5px;width:598px;height:34.5px;background:#3c3c3c"></div>
<div style="left:986px;top:712.5px;width:14px;height:34.5px;background:linear-gradient(#222,#2b2b2b)"></div>
<div style="left:1000px;top:747px;width:598px;height:34.799999999999955px;background:#7b7b7b"></div>
<div style="left:986px;top:747px;width:14px;height:34.799999999999955px;background:linear-gradient(#222,#2b2b2b)"></div>
<div style="left:1000px;top:781.8px;width:598px;height:14.0px;background:#3c3c3c"></div>
<div style="left:986px;top:781.8px;width:14px;height:14.0px;background:linear-gradient(#222,#2b2b2b)"></div>
<div style="left:1000px;top:600px;width:598px;height:195.8px;overflow:hidden">
<div style="left:74.29999999999995px;top:13.9px;font-size:19.5px;line-height:19.5px;color:#f4f2ea;-webkit-text-stroke:0.25px #f4f2ea;white-space:nowrap;transform:scaleX(0.83);transform-origin:0 0">White</div>
<div style="left:150.79999999999995px;top:13.9px;font-size:19.5px;line-height:19.5px;color:#f4f2ea;-webkit-text-stroke:0.25px #f4f2ea;white-space:nowrap;transform:scaleX(0.83);transform-origin:0 0">Red</div>
<div style="left:218.29999999999995px;top:13.9px;font-size:19.5px;line-height:19.5px;color:#f4f2ea;-webkit-text-stroke:0.25px #f4f2ea;white-space:nowrap;transform:scaleX(0.83);transform-origin:0 0">Green</div>
<div style="left:295px;top:13.9px;font-size:19.5px;line-height:19.5px;color:#f4f2ea;-webkit-text-stroke:0.25px #f4f2ea;white-space:nowrap;transform:scaleX(0.83);transform-origin:0 0">Blue</div>
<div style="left:362.4000000000001px;top:13.9px;font-size:19.5px;line-height:19.5px;color:#f4f2ea;-webkit-text-stroke:0.25px #f4f2ea;white-space:nowrap;transform:scaleX(0.83);transform-origin:0 0">Cyan</div>
<div style="left:439.20000000000005px;top:13.9px;font-size:19.5px;line-height:19.5px;color:#f4f2ea;-webkit-text-stroke:0.25px #f4f2ea;white-space:nowrap;transform:scaleX(0.83);transform-origin:0 0">Magenta</div>
<div style="left:507.79999999999995px;top:13.9px;font-size:19.5px;line-height:19.5px;color:#f4f2ea;-webkit-text-stroke:0.25px #f4f2ea;white-space:nowrap;transform:scaleX(0.83);transform-origin:0 0">Yellow</div>
<div style="left:584.5999999999999px;top:13.9px;font-size:19.5px;line-height:19.5px;color:#f4f2ea;-webkit-text-stroke:0.25px #f4f2ea;white-space:nowrap;transform:scaleX(0.83);transform-origin:0 0">100W</div>
<div style="left:4px;top:51.5px;font-size:19.5px;line-height:19.5px;color:#f4f2ea;-webkit-text-stroke:0.25px #f4f2ea;white-space:nowrap;transform:scaleX(0.83);transform-origin:0 0">x: CIE31</div>
<div style="left:74.29999999999995px;top:51.5px;font-size:19.5px;line-height:19.5px;color:#f4f2ea;-webkit-text-stroke:0.25px #f4f2ea;white-space:nowrap;transform:scaleX(0.83);transform-origin:0 0">0,2999</div>
<div style="left:150.79999999999995px;top:51.5px;font-size:19.5px;line-height:19.5px;color:#f4f2ea;-webkit-text-stroke:0.25px #f4f2ea;white-space:nowrap;transform:scaleX(0.83);transform-origin:0 0">0,6404</div>
<div style="left:218.29999999999995px;top:51.5px;font-size:19.5px;line-height:19.5px;color:#f4f2ea;-webkit-text-stroke:0.25px #f4f2ea;white-space:nowrap;transform:scaleX(0.83);transform-origin:0 0">0,3379</div>
<div style="left:295px;top:51.5px;font-size:19.5px;line-height:19.5px;color:#f4f2ea;-webkit-text-stroke:0.25px #f4f2ea;white-space:nowrap;transform:scaleX(0.83);transform-origin:0 0">0,1512</div>
<div style="left:362.4000000000001px;top:51.5px;font-size:19.5px;line-height:19.5px;color:#f4f2ea;-webkit-text-stroke:0.25px #f4f2ea;white-space:nowrap;transform:scaleX(0.83);transform-origin:0 0">0,2376</div>
<div style="left:439.20000000000005px;top:51.5px;font-size:19.5px;line-height:19.5px;color:#f4f2ea;-webkit-text-stroke:0.25px #f4f2ea;white-space:nowrap;transform:scaleX(0.83);transform-origin:0 0">0,2726</div>
<div style="left:507.79999999999995px;top:51.5px;font-size:19.5px;line-height:19.5px;color:#f4f2ea;-webkit-text-stroke:0.25px #f4f2ea;white-space:nowrap;transform:scaleX(0.83);transform-origin:0 0">0,4264</div>
<div style="left:584.5999999999999px;top:51.5px;font-size:19.5px;line-height:19.5px;color:#f4f2ea;-webkit-text-stroke:0.25px #f4f2ea;white-space:nowrap;transform:scaleX(0.83);transform-origin:0 0">0,3022</div>
<div style="left:4px;top:86.3px;font-size:19.5px;line-height:19.5px;color:#f4f2ea;-webkit-text-stroke:0.25px #f4f2ea;white-space:nowrap;transform:scaleX(0.83);transform-origin:0 0">y: CIE31</div>
<div style="left:74.29999999999995px;top:86.3px;font-size:19.5px;line-height:19.5px;color:#f4f2ea;-webkit-text-stroke:0.25px #f4f2ea;white-space:nowrap;transform:scaleX(0.83);transform-origin:0 0">0,3263</div>
<div style="left:150.79999999999995px;top:86.3px;font-size:19.5px;line-height:19.5px;color:#f4f2ea;-webkit-text-stroke:0.25px #f4f2ea;white-space:nowrap;transform:scaleX(0.83);transform-origin:0 0">0,3402</div>
<div style="left:218.29999999999995px;top:86.3px;font-size:19.5px;line-height:19.5px;color:#f4f2ea;-webkit-text-stroke:0.25px #f4f2ea;white-space:nowrap;transform:scaleX(0.83);transform-origin:0 0">0,6210</div>
<div style="left:295px;top:86.3px;font-size:19.5px;line-height:19.5px;color:#f4f2ea;-webkit-text-stroke:0.25px #f4f2ea;white-space:nowrap;transform:scaleX(0.83);transform-origin:0 0">0,0688</div>
<div style="left:362.4000000000001px;top:86.3px;font-size:19.5px;line-height:19.5px;color:#f4f2ea;-webkit-text-stroke:0.25px #f4f2ea;white-space:nowrap;transform:scaleX(0.83);transform-origin:0 0">0,3249</div>
<div style="left:439.20000000000005px;top:86.3px;font-size:19.5px;line-height:19.5px;color:#f4f2ea;-webkit-text-stroke:0.25px #f4f2ea;white-space:nowrap;transform:scaleX(0.83);transform-origin:0 0">0,1358</div>
<div style="left:507.79999999999995px;top:86.3px;font-size:19.5px;line-height:19.5px;color:#f4f2ea;-webkit-text-stroke:0.25px #f4f2ea;white-space:nowrap;transform:scaleX(0.83);transform-origin:0 0">0,5408</div>
<div style="left:584.5999999999999px;top:86.3px;font-size:19.5px;line-height:19.5px;color:#f4f2ea;-webkit-text-stroke:0.25px #f4f2ea;white-space:nowrap;transform:scaleX(0.83);transform-origin:0 0">0,3286</div>
<div style="left:4px;top:121.0px;font-size:19.5px;line-height:19.5px;color:#f4f2ea;-webkit-text-stroke:0.25px #f4f2ea;white-space:nowrap;transform:scaleX(0.83);transform-origin:0 0">Y</div>
<div style="left:74.29999999999995px;top:121.0px;font-size:19.5px;line-height:19.5px;color:#f4f2ea;-webkit-text-stroke:0.25px #f4f2ea;white-space:nowrap;transform:scaleX(0.83);transform-origin:0 0">268,2194</div>
<div style="left:150.79999999999995px;top:121.0px;font-size:19.5px;line-height:19.5px;color:#f4f2ea;-webkit-text-stroke:0.25px #f4f2ea;white-space:nowrap;transform:scaleX(0.83);transform-origin:0 0">38,3585</div>
<div style="left:218.29999999999995px;top:121.0px;font-size:19.5px;line-height:19.5px;color:#f4f2ea;-webkit-text-stroke:0.25px #f4f2ea;white-space:nowrap;transform:scaleX(0.83);transform-origin:0 0">182,8324</div>
<div style="left:295px;top:121.0px;font-size:19.5px;line-height:19.5px;color:#f4f2ea;-webkit-text-stroke:0.25px #f4f2ea;white-space:nowrap;transform:scaleX(0.83);transform-origin:0 0">23,2370</div>
<div style="left:362.4000000000001px;top:121.0px;font-size:19.5px;line-height:19.5px;color:#f4f2ea;-webkit-text-stroke:0.25px #f4f2ea;white-space:nowrap;transform:scaleX(0.83);transform-origin:0 0">218,7021</div>
<div style="left:439.20000000000005px;top:121.0px;font-size:19.5px;line-height:19.5px;color:#f4f2ea;-webkit-text-stroke:0.25px #f4f2ea;white-space:nowrap;transform:scaleX(0.83);transform-origin:0 0">63,5347</div>
<div style="left:507.79999999999995px;top:121.0px;font-size:19.5px;line-height:19.5px;color:#f4f2ea;-webkit-text-stroke:0.25px #f4f2ea;white-space:nowrap;transform:scaleX(0.83);transform-origin:0 0">231,0635</div>
<div style="left:584.5999999999999px;top:121.0px;font-size:19.5px;line-height:19.5px;color:#f4f2ea;-webkit-text-stroke:0.25px #f4f2ea;white-space:nowrap;transform:scaleX(0.83);transform-origin:0 0">484,7500</div>
<div style="left:4px;top:155.5px;font-size:19.5px;line-height:19.5px;color:#f4f2ea;-webkit-text-stroke:0.25px #f4f2ea;white-space:nowrap;transform:scaleX(0.83);transform-origin:0 0">Target Y</div>
<div style="left:74.29999999999995px;top:155.5px;font-size:19.5px;line-height:19.5px;color:#f4f2ea;-webkit-text-stroke:0.25px #f4f2ea;white-space:nowrap;transform:scaleX(0.83);transform-origin:0 0">268,2194</div>
<div style="left:150.79999999999995px;top:155.5px;font-size:19.5px;line-height:19.5px;color:#f4f2ea;-webkit-text-stroke:0.25px #f4f2ea;white-space:nowrap;transform:scaleX(0.83);transform-origin:0 0">57,0384</div>
<div style="left:218.29999999999995px;top:155.5px;font-size:19.5px;line-height:19.5px;color:#f4f2ea;-webkit-text-stroke:0.25px #f4f2ea;white-space:nowrap;transform:scaleX(0.83);transform-origin:0 0">191,8193</div>
<div style="left:295px;top:155.5px;font-size:19.5px;line-height:19.5px;color:#f4f2ea;-webkit-text-stroke:0.25px #f4f2ea;white-space:nowrap;transform:scaleX(0.83);transform-origin:0 0">19,3616</div>
<div style="left:362.4000000000001px;top:155.5px;font-size:19.5px;line-height:19.5px;color:#f4f2ea;-webkit-text-stroke:0.25px #f4f2ea;white-space:nowrap;transform:scaleX(0.83);transform-origin:0 0">211,1809</div>
<div style="left:439.20000000000005px;top:155.5px;font-size:19.5px;line-height:19.5px;color:#f4f2ea;-webkit-text-stroke:0.25px #f4f2ea;white-space:nowrap;transform:scaleX(0.83);transform-origin:0 0">76,4000</div>
<div style="left:507.79999999999995px;top:155.5px;font-size:19.5px;line-height:19.5px;color:#f4f2ea;-webkit-text-stroke:0.25px #f4f2ea;white-space:nowrap;transform:scaleX(0.83);transform-origin:0 0">248,8578</div>
<div style="left:584.5999999999999px;top:155.5px;font-size:19.5px;line-height:19.5px;color:#f4f2ea;-webkit-text-stroke:0.25px #f4f2ea;white-space:nowrap;transform:scaleX(0.83);transform-origin:0 0">484,7500</div>
<div style="left:4px;top:190.0px;font-size:19.5px;line-height:19.5px;color:#f4f2ea;-webkit-text-stroke:0.25px #f4f2ea;white-space:nowrap;transform:scaleX(0.83);transform-origin:0 0">ΔE 2000</div>
<div style="left:74.29999999999995px;top:190.0px;font-size:19.5px;line-height:19.5px;color:#f4f2ea;-webkit-text-stroke:0.25px #f4f2ea;white-space:nowrap;transform:scaleX(0.83);transform-origin:0 0">6,2453</div>
<div style="left:150.79999999999995px;top:190.0px;font-size:19.5px;line-height:19.5px;color:#f4f2ea;-webkit-text-stroke:0.25px #f4f2ea;white-space:nowrap;transform:scaleX(0.83);transform-origin:0 0">6,8654</div>
<div style="left:218.29999999999995px;top:190.0px;font-size:19.5px;line-height:19.5px;color:#f4f2ea;-webkit-text-stroke:0.25px #f4f2ea;white-space:nowrap;transform:scaleX(0.83);transform-origin:0 0">6,9393</div>
<div style="left:295px;top:190.0px;font-size:19.5px;line-height:19.5px;color:#f4f2ea;-webkit-text-stroke:0.25px #f4f2ea;white-space:nowrap;transform:scaleX(0.83);transform-origin:0 0">2,6993</div>
<div style="left:362.4000000000001px;top:190.0px;font-size:19.5px;line-height:19.5px;color:#f4f2ea;-webkit-text-stroke:0.25px #f4f2ea;white-space:nowrap;transform:scaleX(0.83);transform-origin:0 0">3,0469</div>
<div style="left:439.20000000000005px;top:190.0px;font-size:19.5px;line-height:19.5px;color:#f4f2ea;-webkit-text-stroke:0.25px #f4f2ea;white-space:nowrap;transform:scaleX(0.83);transform-origin:0 0">6,1407</div>
<div style="left:507.79999999999995px;top:190.0px;font-size:19.5px;line-height:19.5px;color:#f4f2ea;-webkit-text-stroke:0.25px #f4f2ea;white-space:nowrap;transform:scaleX(0.83);transform-origin:0 0">4,3350</div>
<div style="left:584.5999999999999px;top:190.0px;font-size:19.5px;line-height:19.5px;color:#f4f2ea;-webkit-text-stroke:0.25px #f4f2ea;white-space:nowrap;transform:scaleX(0.83);transform-origin:0 0">7,0000</div>
</div>
<div style="left:1600px;top:643.5px;width:14.5px;height:152px;background:#454545;border-radius:3px"></div>
<div style="left:1601px;top:644.5px;width:12.5px;height:19px;background:#777;border-radius:3px"></div>
<svg style="left:1601px;top:648px" width="13" height="10"><path d="M1.5 8L6.5 2L11.5 8Z" fill="#3a3a3a"/></svg>
<div style="left:1601px;top:667px;width:12.5px;height:83px;background:#3c3c3c;border-radius:6px"></div>
<div style="left:1601px;top:776px;width:12.5px;height:19px;background:#777;border-radius:3px"></div>
<svg style="left:1601px;top:781px" width="13" height="10"><path d="M1.5 2L6.5 8L11.5 2Z" fill="#3a3a3a"/></svg>
<div style="left:1000.3px;top:796.4px;width:597.7px;height:21px;background:#4e4e4e;border-radius:3px"></div>
<div style="left:1001.3px;top:797.5px;width:14px;height:19px;background:#8a8a8a;border-radius:3px"></div>
<svg style="left:1001px;top:800px" width="14" height="13"><path d="M4 6.5L10 1.5V11.5Z" fill="#3a3a3a"/></svg>
<div style="left:1019px;top:798px;width:512px;height:17.5px;background:#3a3a3a;border-radius:9px"></div>
<div style="left:1583.8px;top:797.5px;width:14px;height:19px;background:#8a8a8a;border-radius:3px"></div>
<svg style="left:1584px;top:800px" width="14" height="13"><path d="M10 6.5L4 1.5V11.5Z" fill="#3a3a3a"/></svg>
<div style="left:-3.7px;top:826.6px;width:155.5px;height:80px;background:linear-gradient(#b4b4b4,#9a9a9a 8%,#8c8c8c 45%,#777 75%,#6a6a6a);border-radius:5px 5px 0 0;box-shadow:inset 0 1px 0 #c8c8c8"></div>
<div style="left:3.0px;top:833px;width:142.6px;height:44.6px;background:#c0c0c0;border-radius:5px;box-shadow:inset 1px 1px 1.5px rgba(0,0,0,0.45),inset -1px -1px 1px rgba(255,255,255,0.25)"></div>
<div style="left:14.3px;top:886.6px;width:120px;text-align:center;font-size:13.5px;line-height:13.5px;color:#333;white-space:nowrap;font-weight:bold">White</div>
<div style="left:154.20000000000002px;top:826.6px;width:155.5px;height:80px;background:linear-gradient(#b4b4b4,#9a9a9a 8%,#8c8c8c 45%,#777 75%,#6a6a6a);border-radius:5px 5px 0 0;box-shadow:inset 0 1px 0 #c8c8c8"></div>
<div style="left:160.9px;top:833px;width:142.6px;height:44.6px;background:#c00000;border-radius:5px;box-shadow:inset 1px 1px 1.5px rgba(0,0,0,0.45),inset -1px -1px 1px rgba(255,255,255,0.25)"></div>
<div style="left:172.2px;top:886.6px;width:120px;text-align:center;font-size:13.5px;line-height:13.5px;color:#333;white-space:nowrap;font-weight:bold">Red</div>
<div style="left:312.1px;top:826.6px;width:155.5px;height:80px;background:linear-gradient(#b4b4b4,#9a9a9a 8%,#8c8c8c 45%,#777 75%,#6a6a6a);border-radius:5px 5px 0 0;box-shadow:inset 0 1px 0 #c8c8c8"></div>
<div style="left:318.8px;top:833px;width:142.6px;height:44.6px;background:#00c000;border-radius:5px;box-shadow:inset 1px 1px 1.5px rgba(0,0,0,0.45),inset -1px -1px 1px rgba(255,255,255,0.25)"></div>
<div style="left:330.1px;top:886.6px;width:120px;text-align:center;font-size:13.5px;line-height:13.5px;color:#333;white-space:nowrap;font-weight:bold">Green</div>
<div style="left:470.00000000000006px;top:826.6px;width:155.5px;height:80px;background:linear-gradient(#b4b4b4,#9a9a9a 8%,#8c8c8c 45%,#777 75%,#6a6a6a);border-radius:5px 5px 0 0;box-shadow:inset 0 1px 0 #c8c8c8"></div>
<div style="left:476.70000000000005px;top:833px;width:142.6px;height:44.6px;background:#0000c0;border-radius:5px;box-shadow:inset 1px 1px 1.5px rgba(0,0,0,0.45),inset -1px -1px 1px rgba(255,255,255,0.25)"></div>
<div style="left:488.0px;top:886.6px;width:120px;text-align:center;font-size:13.5px;line-height:13.5px;color:#333;white-space:nowrap;font-weight:bold">Blue</div>
<div style="left:627.9px;top:826.6px;width:155.5px;height:80px;background:linear-gradient(#b4b4b4,#9a9a9a 8%,#8c8c8c 45%,#777 75%,#6a6a6a);border-radius:5px 5px 0 0;box-shadow:inset 0 1px 0 #c8c8c8"></div>
<div style="left:634.6px;top:833px;width:142.6px;height:44.6px;background:#00c0c0;border-radius:5px;box-shadow:inset 1px 1px 1.5px rgba(0,0,0,0.45),inset -1px -1px 1px rgba(255,255,255,0.25)"></div>
<div style="left:645.9px;top:886.6px;width:120px;text-align:center;font-size:13.5px;line-height:13.5px;color:#333;white-space:nowrap;font-weight:bold">Cyan</div>
<div style="left:785.8px;top:826.6px;width:155.5px;height:80px;background:linear-gradient(#b4b4b4,#9a9a9a 8%,#8c8c8c 45%,#777 75%,#6a6a6a);border-radius:5px 5px 0 0;box-shadow:inset 0 1px 0 #c8c8c8"></div>
<div style="left:792.5px;top:833px;width:142.6px;height:44.6px;background:#c000c0;border-radius:5px;box-shadow:inset 1px 1px 1.5px rgba(0,0,0,0.45),inset -1px -1px 1px rgba(255,255,255,0.25)"></div>
<div style="left:803.8px;top:886.6px;width:120px;text-align:center;font-size:13.5px;line-height:13.5px;color:#333;white-space:nowrap;font-weight:bold">Magenta</div>
<div style="left:943.7px;top:826.6px;width:155.5px;height:80px;background:linear-gradient(#b4b4b4,#9a9a9a 8%,#8c8c8c 45%,#777 75%,#6a6a6a);border-radius:5px 5px 0 0;box-shadow:inset 0 1px 0 #c8c8c8"></div>
<div style="left:950.4000000000001px;top:833px;width:142.6px;height:44.6px;background:#c4c400;border-radius:5px;box-shadow:inset 1px 1px 1.5px rgba(0,0,0,0.45),inset -1px -1px 1px rgba(255,255,255,0.25)"></div>
<div style="left:961.7px;top:886.6px;width:120px;text-align:center;font-size:13.5px;line-height:13.5px;color:#333;white-space:nowrap;font-weight:bold">Yellow</div>
<div style="left:1101.6px;top:826.6px;width:155.5px;height:80px;background:#262626;border-radius:5px 5px 0 0"></div>
<div style="left:1108.1px;top:832.5px;width:143.5px;height:45px;background:#ffffff;border-radius:5px;box-shadow:inset 1px 1px 1px #888"></div>
<div style="left:1119.6px;top:887.1px;width:120px;text-align:center;font-size:14px;line-height:14px;color:#fff;white-space:nowrap;font-weight:bold">100W</div>
<div style="left:1261px;top:826.3px;width:60.2px;height:23px;background:linear-gradient(#b8b8b8,#8e8e8e);border-radius:6px 6px 0 0"></div>
<div style="left:1261px;top:849.4px;width:60.2px;height:1px;background:#3a3a3a"></div>
<div style="left:1261px;top:850.4px;width:60.2px;height:50px;background:linear-gradient(#a8a8a8,#6e6e6e)"></div>
<div style="left:1282px;top:828px;width:19px;height:19px;border-radius:50%;background:radial-gradient(circle at 50% 60%,#a0a0a0,#888 60%,#9a9a9a)"></div>
<svg style="left:1285px;top:833px" width="14" height="9"><path d="M0 8L7 1L14 8Z" fill="#333"/></svg>
<div style="left:1271.5px;top:857px;width:39px;height:38.5px;box-sizing:border-box;border:3px solid #1c1c1c;border-radius:6px;background:linear-gradient(#b0b0b0 50%,#8e8e8e 50%)"></div>
<div style="left:1282.6px;top:867.8px;width:17.3px;height:17px;background:#080808"></div>
<div style="left:1321.8px;top:826.3px;width:282.7px;height:37.8px;background:linear-gradient(#bcbcbc,#a0a0a0 30%,#8a8a8a 60%,#6e6e6e)"></div>
<div style="left:1380.3px;top:826.3px;width:1.2px;height:37.8px;background:#3a3a3a"></div>
<div style="left:1436.4px;top:826.3px;width:1.2px;height:37.8px;background:#3a3a3a"></div>
<div style="left:1492.7px;top:826.3px;width:1.2px;height:37.8px;background:#3a3a3a"></div>
<div style="left:1549.3px;top:826.3px;width:1.2px;height:37.8px;background:#3a3a3a"></div>
<div style="left:1338.7px;top:832.5px;width:25px;height:25px;border-radius:50%;background:linear-gradient(#8a8a8a,#969696 50%,#a8a8a8)"></div>
<div style="left:1396.0px;top:832.5px;width:25px;height:25px;border-radius:50%;background:linear-gradient(#8a8a8a,#969696 50%,#a8a8a8)"></div>
<div style="left:1452.0px;top:832.5px;width:25px;height:25px;border-radius:50%;background:linear-gradient(#8a8a8a,#969696 50%,#a8a8a8)"></div>
<div style="left:1508.5px;top:832.5px;width:25px;height:25px;border-radius:50%;background:linear-gradient(#8a8a8a,#969696 50%,#a8a8a8)"></div>
<div style="left:1564.5px;top:832.5px;width:25px;height:25px;border-radius:50%;background:linear-gradient(#8a8a8a,#969696 50%,#a8a8a8)"></div>
<svg style="left:0;top:0" width="1649" height="897"><rect x="1346.6" y="840" width="9.6" height="9.6" fill="#333"/><path d="M1404 838.5L1415 845L1404 851.5Z" fill="#333"/><path d="M1461 840H1458.5V852H1461M1469 840H1471.5V852H1469" fill="none" stroke="#333" stroke-width="2"/><rect x="1462.8" y="845" width="1.9" height="2" fill="#333"/><rect x="1466.6" y="845" width="1.9" height="2" fill="#333"/><path d="M1521 845C1518 841 1513.5 841 1513.5 845C1513.5 849 1518 849 1521 845C1524 841 1528.5 841 1528.5 845C1528.5 849 1524 849 1521 845Z" fill="none" stroke="#333" stroke-width="2.2"/><path d="M1572.38 847.37A5.3 5.3 0 0 1 1579.31 841.02M1582.62 844.63A5.3 5.3 0 0 1 1575.69 850.98" fill="none" stroke="#333" stroke-width="2.6"/><path d="M1582.32 842.11L1580.41 838.01L1578.22 844.03Z M1572.68 849.89L1574.59 853.99L1576.78 847.97Z" fill="#333"/></svg>
<div style="left:1321.8px;top:865.5px;width:170.9px;height:40px;background:linear-gradient(#bcbcbc,#a0a0a0 30%,#8a8a8a 60%,#6e6e6e);border-radius:6px 0 0 0"></div>
<div style="left:1492.7px;top:864px;width:1.3px;height:40px;background:#3a3a3a"></div>
<div style="left:1494px;top:865.5px;width:170px;height:40px;background:linear-gradient(#bcbcbc,#a0a0a0 30%,#8a8a8a 60%,#6e6e6e)"></div>
<div style="left:1348.5px;top:871px;width:25px;height:25px;border-radius:50%;background:linear-gradient(#8a8a8a,#969696 50%,#a8a8a8)"></div>
<div style="left:1614.5px;top:871px;width:25px;height:25px;border-radius:50%;background:linear-gradient(#8a8a8a,#969696 50%,#a8a8a8)"></div>
<svg style="left:0;top:0" width="1649" height="897"><path d="M1361 878L1356 884L1361 890M1366 878L1361 884L1366 890" fill="none" stroke="#333" stroke-width="2"/><path d="M1623 878L1628 884L1623 890M1628 878L1633 884L1628 890" fill="none" stroke="#333" stroke-width="2"/></svg>
<div style="left:1394.5px;top:870.4px;font-size:27.5px;line-height:27.5px;color:#333;white-space:nowrap;letter-spacing:0.3px;-webkit-text-stroke:0.6px #333">Back</div>
<div style="left:1527.5px;top:870.4px;font-size:27.5px;line-height:27.5px;color:#333;white-space:nowrap;letter-spacing:2.2px;-webkit-text-stroke:0.6px #333">Next</div>
<div style="left:1605px;top:826px;width:44px;height:36px;background:#333333"></div>
<svg style="left:1610px;top:824px" width="39" height="40"><g stroke="#3a0000" stroke-width="6" opacity="0.5" transform="translate(1,1.5)"><path d="M22 3.5V36.5"/><path d="M7.7 11.75L36.3 28.25"/><path d="M7.7 28.25L36.3 11.75"/></g><g stroke="#e40c0c" stroke-width="6"><path d="M22 3.5V36.5"/><path d="M7.7 11.75L36.3 28.25"/><path d="M7.7 28.25L36.3 11.75"/></g></svg>
</body></html>
